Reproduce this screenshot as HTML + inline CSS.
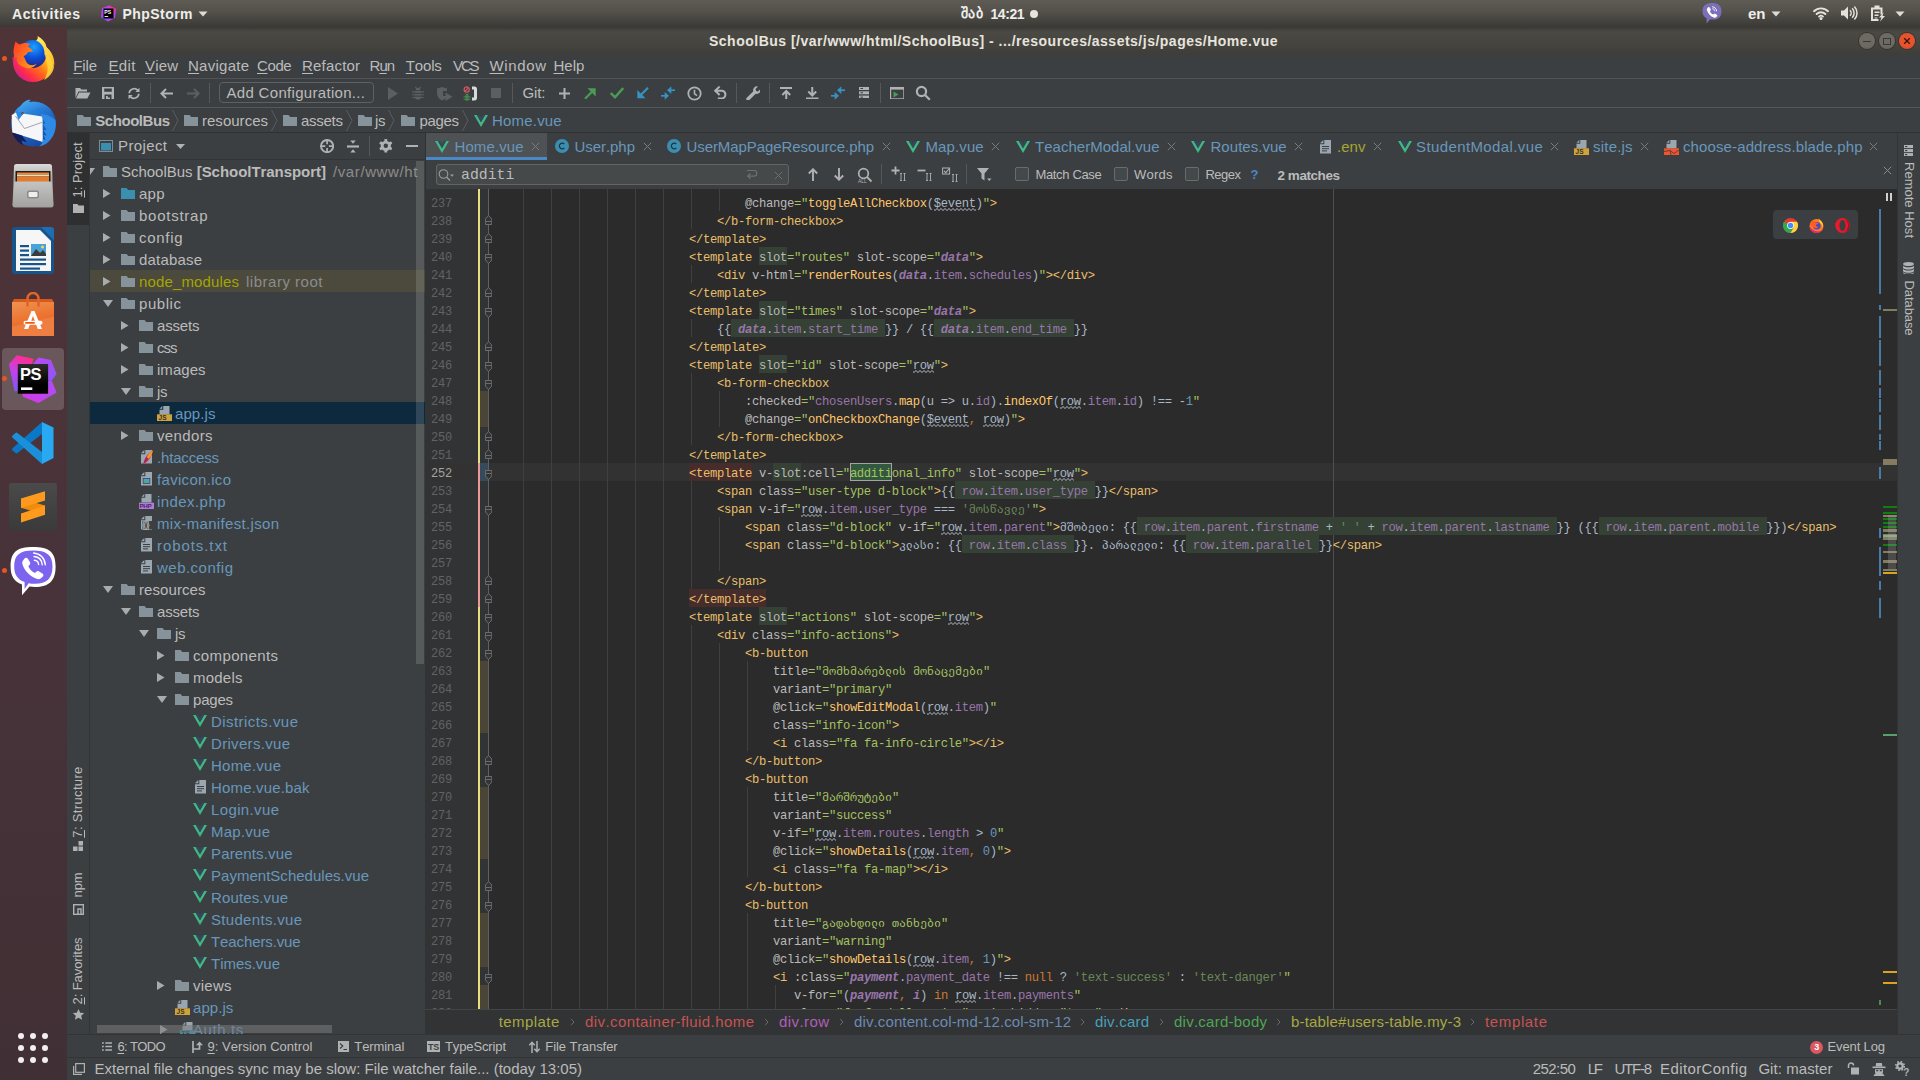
<!DOCTYPE html>
<html><head><meta charset="utf-8"><title>PhpStorm</title>
<style>
html,body{margin:0;padding:0;background:#3c3f41;}
body{width:1920px;height:1080px;position:relative;overflow:hidden;font-family:"Liberation Sans",sans-serif;font-kerning:none;-webkit-font-smoothing:antialiased;}
.b{position:absolute;display:block;}
.t{position:absolute;white-space:pre;display:block;}
.m{font-family:"Liberation Mono",monospace;}
.wv{height:3px;background:linear-gradient(135deg,transparent 38%,#9298a0 38%,#9298a0 62%,transparent 62%) 0 0/4px 3px repeat-x,linear-gradient(45deg,transparent 38%,#9298a0 38%,#9298a0 62%,transparent 62%) 2px 0/4px 3px repeat-x;opacity:.65}
</style></head>
<body>
<!-- top -->
<div class="b" style="left:0px;top:0px;width:1920px;height:27px;background:linear-gradient(#5e5b54,#55524c 40%,#3b3935);"></div>
<span class="t" style="left:12px;top:3.5px;line-height:20px;font-size:14px;color:#eeeeec;font-weight:700;letter-spacing:0.639px;">Activities</span>
<svg class="b" style="left:100px;top:5px;" width="17" height="17" viewBox="0 0 17 17"><path d="M2 3 L9 0.5 L16 4 L15 13 L8 16.5 L1 12z" fill="#b345f1"/><path d="M9 0.5 L16 4 L13 9z" fill="#ff318c"/><path d="M1 12 L8 16.5 L6 9z" fill="#7a57f5"/><rect x="3.5" y="3.5" width="10" height="10" fill="#000"/><rect x="4.6" y="11" width="3.6" height="0.9" fill="#fff"/><text x="4.3" y="9" font-size="5.2" font-weight="700" fill="#fff" font-family="Liberation Sans">PS</text></svg>
<span class="t" style="left:122.5px;top:3.5px;line-height:20px;font-size:14px;color:#eeeeec;font-weight:700;letter-spacing:0.444px;">PhpStorm</span>
<svg class="b" style="left:198px;top:11px;" width="10" height="6" viewBox="0 0 10 6"><path d="M0.5 0.5h9l-4.5 5z" fill="#dcdcd8"/></svg>
<span class="t" style="left:960.5px;top:3.5px;line-height:20px;font-size:13.5px;color:#eeeeec;font-weight:700;letter-spacing:0.978px;">შაბ</span>
<span class="t" style="left:990.5px;top:3.5px;line-height:20px;font-size:14px;color:#eeeeec;font-weight:700;letter-spacing:-0.452px;">14:21</span>
<div class="b" style="left:1030px;top:9.5px;width:8px;height:8px;background:#e6e4de;border-radius:50%"></div>
<svg class="b" style="left:1701px;top:1.5px;" width="22" height="22" viewBox="0 0 22 22"><path d="M11 1c6 0 9.5 2.3 9.5 8.2 0 5.900-3.500 8.400-8.600 8.400-1 0-2-.1-2.800-.3L5.600 21.500v-5.300C2.800 14.800 1.500 12.700 1.500 9.200 1.500 3.300 5 1 11 1z" fill="#7c6fb8"/><path d="M7 5.500c.5-.6 1.300-.5 1.700.1l1 1.600c.3.500.2 1-.2 1.400l-.6.600c.6 1.600 1.700 2.700 3.300 3.400l.6-.6c.4-.4 1-.5 1.400-.2l1.600 1c.6.400.7 1.200.1 1.700l-.8.700c-.6.500-1.400.6-2.200.3C9.600 14.200 7.100 11.700 6 8.400c-.3-.8-.2-1.600.3-2.200z" fill="#fff"/><path d="M11.500 4.800c2.300.2 3.900 1.800 4.100 4.100M11.700 6.800c1.200.1 2 .9 2.100 2.100" stroke="#fff" stroke-width=".9" fill="none" stroke-linecap="round"/></svg>
<span class="t" style="left:1748px;top:4px;line-height:20px;font-size:15px;color:#eeeeec;font-weight:700;letter-spacing:-0.005px;">en</span>
<svg class="b" style="left:1771px;top:10.5px;" width="10" height="6" viewBox="0 0 10 6"><path d="M0.500 0.500h9l-4.500 5z" fill="#dcdcd8"/></svg>
<svg class="b" style="left:1813px;top:6px;" width="16" height="14" viewBox="0 0 16 14"><path d="M1 5.200a10 10 0 0 1 14 0" stroke="#e4e2dc" stroke-width="1.900" fill="none" stroke-linecap="round"/><path d="M3.600 8a6.300 6.300 0 0 1 8.800 0" stroke="#e4e2dc" stroke-width="1.900" fill="none" stroke-linecap="round"/><path d="M6 10.600a2.900 2.900 0 0 1 4 0" stroke="#e4e2dc" stroke-width="1.800" fill="none" stroke-linecap="round"/><circle cx="8" cy="12.600" r="1.500" fill="#e4e2dc"/></svg>
<svg class="b" style="left:1840px;top:5px;" width="18" height="16" viewBox="0 0 18 16"><path d="M1 5.500h3l4-4v13l-4-4h-3z" fill="#e4e2dc"/><path d="M10 5.200a4 4 0 0 1 0 5.600M12.200 3.200a7 7 0 0 1 0 9.600M14.400 1.400a9.600 9.600 0 0 1 0 13.200" stroke="#e4e2dc" stroke-width="1.500" fill="none"/></svg>
<svg class="b" style="left:1870px;top:5px;" width="16" height="17" viewBox="0 0 16 17"><path d="M4.500 0.500h5v2h3v7h-2v-5h-7.500v9.500h5.500v2h-7.500v-13.500h3.500z" fill="#e4e2dc"/><path d="M4.500 6.500h5v1.600h-5zM4.500 9.500h4v1.600h-4zM4.500 12.500h3v1h-3z" fill="#e4e2dc"/><path d="M13.500 7.500l-4.500 5h2.500l-1.500 4 5-5.500h-2.500z" fill="#e4e2dc"/></svg>
<svg class="b" style="left:1895px;top:10.5px;" width="10" height="6" viewBox="0 0 10 6"><path d="M0.500 0.500h9l-4.500 5z" fill="#dcdcd8"/></svg>
<div class="b" style="left:67px;top:27px;width:1853px;height:28px;background:linear-gradient(#3b3935,#4b4943 18%,#46443f 60%,#3f3d39);"></div>
<span class="t" style="left:709px;top:31px;line-height:20px;font-size:14px;color:#e6e4de;font-weight:700;letter-spacing:0.495px;">SchoolBus [/var/www/html/SchoolBus] - .../resources/assets/js/pages/Home.vue</span>
<div class="b" style="left:1859px;top:33px;width:16px;height:16px;background:radial-gradient(circle at 50% 35%,#6d6a63,#6d6a63 60%,#5a5751);border-radius:50%;box-shadow:0 0 0 1px #35332f"></div>
<div class="b" style="left:1863px;top:41px;width:8px;height:1px;background:#3a3835;"></div>
<div class="b" style="left:1878.8px;top:33px;width:16px;height:16px;background:radial-gradient(circle at 50% 35%,#6d6a63,#6d6a63 60%,#5a5751);border-radius:50%;box-shadow:0 0 0 1px #35332f"></div>
<div class="b" style="left:1882.8px;top:37.5px;width:8px;height:7px;background:transparent;box-sizing:border-box;border:1px solid #3a3835"></div>
<div class="b" style="left:1898.8px;top:33px;width:16px;height:16px;background:radial-gradient(circle at 50% 35%,#e6532c,#e6532c 60%,#c9431f);border-radius:50%;box-shadow:0 0 0 1px #35332f"></div>
<svg class="b" style="left:1902.8px;top:37px;" width="8" height="8" viewBox="0 0 8 8"><path d="M1.200 1.200l5.600 5.600M6.800 1.200l-5.600 5.600" stroke="#3c1408" stroke-width="1.300"/></svg>
<!-- dock -->
<div class="b" style="left:0px;top:27px;width:67px;height:1053px;background:linear-gradient(#4e3337,#48333a 55%,#402f34);"></div>
<svg class="b" style="left:10px;top:35px;" width="46" height="48" viewBox="0 0 46 48"><defs><linearGradient id="ffa" x1="0.85" y1="0.1" x2="0.15" y2="0.9"><stop offset="0" stop-color="#fff44f"/><stop offset=".3" stop-color="#ffb31a"/><stop offset=".55" stop-color="#ff6a1a"/><stop offset=".8" stop-color="#ff2d4a"/><stop offset="1" stop-color="#d81b8c"/></linearGradient><radialGradient id="ffb" cx="0.55" cy="0.25" r="0.8"><stop offset="0" stop-color="#1aa3ff"/><stop offset=".5" stop-color="#0b4fd8"/><stop offset="1" stop-color="#2a1a6e"/></radialGradient><linearGradient id="ffc" x1="0" y1="0" x2="1" y2="1"><stop offset="0" stop-color="#fff36b"/><stop offset="1" stop-color="#ffb81f"/></linearGradient><linearGradient id="ffd" x1="0" y1="0" x2="1" y2="0.6"><stop offset="0" stop-color="#ff3a2a"/><stop offset="1" stop-color="#ff9a1a"/></linearGradient></defs>
<circle cx="23" cy="27" r="20" fill="url(#ffa)"/>
<circle cx="22.500" cy="19" r="14" fill="url(#ffb)"/>
<path d="M27.500 1C33 4 36.500 8.500 36.500 12.500 41.500 16.500 45.500 23 44 32 42.500 26 39 21 34.500 19.500 35 13 31.500 8 26 5.500 28 4.500 28 2.500 27.500 1z" fill="url(#ffc)"/>
<path d="M34.500 19.500C39 21 42.500 26 44 32 43 38 39 42.500 34 45 38 39 38.500 32 36.500 27 36 24 35.500 21.500 34.500 19.500z" fill="#ffd23a" opacity=".9"/>
<path d="M5.500 6.500C7 8 8.500 9 10 9.500 13 7.500 17 7.500 20.500 9L17.500 11.500C20 12.500 22 14.500 23 16.500L18 17C17 19.500 15.500 20.500 13.500 21 15 23 15.500 26 17 28 20 31 24 30.500 27 28.500 24.500 32.500 20 34 16 33 9 31 4 25 3.500 17 3.500 13 4.500 9.500 5.500 6.500z" fill="url(#ffd)"/>
<path d="M2 22C2.500 31 8 39 16 42.500 9.500 37 6.500 30 7 22 5.500 22.500 3.500 22.500 2 22z" fill="#e3247a" opacity=".55"/></svg>
<svg class="b" style="left:9px;top:98.5px;" width="48" height="48" viewBox="0 0 48 48"><defs><linearGradient id="tba" x1="0.2" y1="0" x2="0.8" y2="1"><stop offset="0" stop-color="#2f9bf0"/><stop offset="1" stop-color="#143f9a"/></linearGradient><linearGradient id="tbb" x1="0" y1="0" x2="1" y2="1"><stop offset="0" stop-color="#4ab4f7"/><stop offset="1" stop-color="#1a5cc2"/></linearGradient></defs>
<circle cx="24.500" cy="25" r="22.500" fill="url(#tba)"/>
<path d="M8 18C8 11 12 4.500 17.500 1.500 19 .7 20.500 .5 21.500 1 20.500 2 20 3 20 3.500 28 1.500 37 4.500 42.500 11 38 8.500 32 8 27 10 22 12 17 13.500 8 18z" fill="url(#tbb)"/>
<path d="M2.700 16L7 13.500 33.500 17.500 33.800 43 3.200 33.500z" fill="#f6f6f8"/>
<path d="M6.500 17L15.500 29.500 33.500 23.200" stroke="#8a8f9c" stroke-width=".8" fill="none"/>
<path d="M6.500 12L14.500 14.500 9.500 21z" fill="#2a86e0"/>
<path d="M31.500 15C37 15 42 17 46.500 21 47.500 28 46 35 42 40 39 44 35 46.500 30 47.500 33 45 34 43 33.800 40L36.500 41 34.500 36 37.500 36.500 34.500 31 37.500 31 34 25 36.500 24.500z" fill="#2f8ae6"/>
<path d="M3.200 33.500C5 39 9 43.500 14 46L12.500 41.500 18 43.500 13 36.600z" fill="#141c5a"/>
<circle cx="13.500" cy="14.300" r="1.100" fill="#2a2010"/><circle cx="13.500" cy="14.300" r=".5" fill="#e8a020"/></svg>
<svg class="b" style="left:12px;top:164px;" width="42" height="45" viewBox="0 0 42 45"><defs><linearGradient id="fla" x1="0" y1="0" x2="0" y2="1"><stop offset="0" stop-color="#dcdcda"/><stop offset=".35" stop-color="#a9a9a7"/><stop offset="1" stop-color="#9a9a98"/></linearGradient><linearGradient id="flb" x1="0" y1="0" x2="0" y2="1"><stop offset="0" stop-color="#c4c4c2"/><stop offset="1" stop-color="#a2a2a0"/></linearGradient></defs>
<path d="M2 2.500a2.500 2.500 0 0 1 2.500-2.500h33a2.500 2.500 0 0 1 2.500 2.500l1.500 38.500a2.500 2.500 0 0 1-2.500 2.500h-36a2.500 2.500 0 0 1-2.500-2.500z" fill="url(#fla)"/>
<rect x="3.500" y="7" width="35" height="12" fill="#1e1e1e"/>
<rect x="5" y="8.500" width="32" height="2" fill="#e8873a"/><rect x="5" y="10.500" width="32" height="2" fill="#f7d9a8"/><rect x="5" y="12.500" width="32" height="6.500" fill="#e27b2c"/>
<path d="M2.500 17.500h37l1.800 23a2.500 2.500 0 0 1-2.500 2.500h-35.600a2.500 2.500 0 0 1-2.500-2.500z" fill="url(#flb)"/>
<rect x="15" y="26.500" width="12" height="8" rx="2" fill="#8a8a88"/><rect x="16.500" y="28" width="9" height="5" rx="1" fill="#eeeeee"/></svg>
<svg class="b" style="left:12px;top:226px;" width="43" height="49" viewBox="0 0 43 49"><path d="M3 1h27l12 12v32a3 3 0 0 1-3 3H3a3 3 0 0 1-3-3V4a3 3 0 0 1 3-3z" fill="#18548a"/>
<path d="M4 4h24l11 11v30H4z" fill="#f6f6f6"/>
<path d="M29 1h10a3 3 0 0 1 3 3v10z" fill="#1d6fb3"/>
<rect x="8" y="19" width="9" height="2.200" fill="#18548a"/><rect x="8" y="23.500" width="9" height="2.200" fill="#18548a"/><rect x="8" y="28" width="9" height="2.200" fill="#18548a"/>
<rect x="8" y="32.500" width="26" height="2.200" fill="#18548a"/><rect x="8" y="37" width="26" height="2.200" fill="#18548a"/><rect x="8" y="41.500" width="20" height="2.200" fill="#18548a"/>
<rect x="19" y="18" width="15" height="12" fill="#4aa3d8"/><path d="M19 30l5-7 4 4 3-3 3 4v2z" fill="#3b3b3b"/><circle cx="30.500" cy="21" r="1.500" fill="#f5d94a"/></svg>
<svg class="b" style="left:11px;top:292px;" width="44" height="46" viewBox="0 0 44 46"><defs><linearGradient id="usa" x1="0" y1="0" x2="0.3" y2="1"><stop offset="0" stop-color="#ee9350"/><stop offset=".65" stop-color="#ec6f2c"/><stop offset=".68" stop-color="#ee7d3f"/><stop offset="1" stop-color="#ee7f42"/></linearGradient></defs>
<path d="M3 7h38l2 3.500H1z" fill="#d9581c"/>
<path d="M16.500 14V6.500a5.500 5.500 0 0 1 11 0V14" stroke="#e0642a" stroke-width="2.600" fill="none"/>
<path d="M1 10h42v34H1z" fill="url(#usa)"/>
<path d="M16.500 10v4.500M27.500 10v4.500" stroke="#e0642a" stroke-width="2.600"/>
<path d="M20.500 19h3l7.500 18h-4.200l-4.800-13-4.800 13H13z" fill="#fff"/>
<rect x="12.500" y="28.800" width="19" height="4" rx="2" fill="#fff"/><rect x="14" y="29.900" width="10" height="1.800" rx=".9" fill="#f05a14"/></svg>
<div class="b" style="left:2px;top:348px;width:62px;height:62px;background:#6a575c;border-radius:4px"></div>
<svg class="b" style="left:9px;top:353px;" width="49" height="51" viewBox="0 0 49 51"><defs><linearGradient id="psa" x1="0.5" y1="0" x2="0.2" y2="1"><stop offset="0" stop-color="#ff2d8e"/><stop offset=".45" stop-color="#c840e8"/><stop offset="1" stop-color="#7a5af5"/></linearGradient><linearGradient id="psb" x1="0" y1="0" x2="1" y2="1"><stop offset="0" stop-color="#c246f2"/><stop offset="1" stop-color="#8a58f6"/></linearGradient><linearGradient id="psd" x1="0" y1="0" x2="0" y2="1"><stop offset="0" stop-color="#fff" stop-opacity=".17"/><stop offset=".7" stop-color="#fff" stop-opacity="0"/></linearGradient><linearGradient id="psc" x1="0" y1="1" x2="1" y2="0"><stop offset="0" stop-color="#d83ae6"/><stop offset="1" stop-color="#a84ff5"/></linearGradient></defs>
<path d="M0 11L7.800 2.200 24.700 5.800 22 14 12 14 12 38 5.400 38.300z" fill="url(#psa)"/>
<path d="M29.500 4.600L42 7 47.600 20.900 42.700 27.500 36 27 36 11 24 11z" fill="url(#psb)"/>
<path d="M13.900 43.700L29.500 50 47.600 39.500 42.700 27.500 36 28 36 39 13 39z" fill="url(#psc)"/>
<rect x="8.800" y="11" width="30.300" height="29.700" fill="#000"/>
<rect x="8.800" y="11" width="30.300" height="29.700" fill="url(#psd)"/>
<rect x="12" y="34.400" width="11.300" height="2.600" fill="#fff"/>
<text x="11" y="27" font-size="16.500" font-weight="700" fill="#fff" font-family="Liberation Sans" letter-spacing="-.4">PS</text></svg>
<svg class="b" style="left:11px;top:421px;" width="44" height="44" viewBox="0 0 44 44"><path d="M31 1L1.300 27.500Q.5 28.500 1.500 29.500L4.500 32Q5.500 32.800 6.500 32L31 13z" fill="#0a78c6"/>
<path d="M1.500 14.500Q.5 15.500 1.300 16.500L31 43V31L6.500 12Q5.500 11.200 4.500 12z" fill="#1b8fd8"/>
<path d="M31 1l11.500 5.400V37L31 43z" fill="#2aa9f3"/></svg>
<div class="b" style="left:9px;top:483px;width:48px;height:48px;background:linear-gradient(#4a4a4a,#3a3a3a);border-radius:3px"></div>
<svg class="b" style="left:9px;top:483px;" width="48" height="48" viewBox="0 0 48 48"><path d="M12 15.500v9.300l24 6.900v-9.200z" fill="#f08c0a"/><path d="M12 15.500l24-7.300v9.300l-24 7.300z" fill="#ff9a1f"/><path d="M12 30.500l24-8v9.200l-24 7.800z" fill="#ff9a1f"/></svg>
<svg class="b" style="left:9px;top:546px;" width="48" height="50" viewBox="0 0 48 50"><path d="M24 1C40 1 46.600 6 46.600 20.500 46.600 35 40 41 26 41 24 41 22 40.900 20.500 40.600L13 49.300V38.500C5 35.500 1.600 30 1.600 20.500 1.600 6 8 1 24 1z" fill="#fff"/>
<path d="M24 4.600C37.500 4.600 43.500 9 43.500 20.500 43.500 32.500 37.500 37.800 26 37.800 23.500 37.800 21.500 37.600 19.600 37.200L15.600 43V36C8.500 33.500 5.200 28.500 5.200 20.500 5.200 9 11 4.600 24 4.600z" fill="#7d64ee"/>
<path d="M15.500 12.500c1-1.200 2.600-1 3.400.2l2 3.300c.6 1 .4 2.100-.4 2.900l-1.200 1.200c1.200 3.200 3.500 5.500 6.700 6.900l1.200-1.200c.8-.8 2-.9 2.900-.4l3.300 2c1.200.8 1.400 2.400.2 3.400l-1.600 1.400c-1.200 1-2.800 1.200-4.400.6-6.600-2.500-11.600-7.500-14-14.100-.6-1.600-.4-3.200.6-4.400z" fill="#fff"/>
<path d="M25 10.500c4.600.4 7.800 3.600 8.200 8.200M25.400 14.300c2.400.2 4 1.800 4.200 4.200M24.600 7c6.500.5 11.200 5.200 11.700 11.700" stroke="#fff" stroke-width="1.400" fill="none" stroke-linecap="round"/></svg>
<div class="b" style="left:2px;top:56.2px;width:5px;height:5px;background:#e95420;border-radius:50%"></div>
<div class="b" style="left:2px;top:376px;width:5px;height:5px;background:#e95420;border-radius:50%"></div>
<div class="b" style="left:2px;top:568px;width:5px;height:5px;background:#e95420;border-radius:50%"></div>
<div class="b" style="left:17.6px;top:1032.5px;width:6.6px;height:6.6px;background:#f2f0ee;border-radius:50%"></div>
<div class="b" style="left:29.65px;top:1032.5px;width:6.6px;height:6.6px;background:#f2f0ee;border-radius:50%"></div>
<div class="b" style="left:41.7px;top:1032.5px;width:6.6px;height:6.6px;background:#f2f0ee;border-radius:50%"></div>
<div class="b" style="left:17.6px;top:1044.7px;width:6.6px;height:6.6px;background:#f2f0ee;border-radius:50%"></div>
<div class="b" style="left:29.65px;top:1044.7px;width:6.6px;height:6.6px;background:#f2f0ee;border-radius:50%"></div>
<div class="b" style="left:41.7px;top:1044.7px;width:6.6px;height:6.6px;background:#f2f0ee;border-radius:50%"></div>
<div class="b" style="left:17.6px;top:1056.9px;width:6.6px;height:6.6px;background:#f2f0ee;border-radius:50%"></div>
<div class="b" style="left:29.65px;top:1056.9px;width:6.6px;height:6.6px;background:#f2f0ee;border-radius:50%"></div>
<div class="b" style="left:41.7px;top:1056.9px;width:6.6px;height:6.6px;background:#f2f0ee;border-radius:50%"></div>
<!-- idetop -->
<div class="b" style="left:67px;top:78px;width:1853px;height:1px;background:#515355;"></div>
<span class="t" style="left:73.3px;top:56px;line-height:20px;font-size:15px;color:#bbbbbb;letter-spacing:-0.157px;text-underline-offset:2px;"><u>F</u>ile</span>
<span class="t" style="left:108.4px;top:56px;line-height:20px;font-size:15px;color:#bbbbbb;letter-spacing:0.384px;text-underline-offset:2px;"><u>E</u>dit</span>
<span class="t" style="left:145px;top:56px;line-height:20px;font-size:15px;color:#bbbbbb;letter-spacing:0.163px;text-underline-offset:2px;"><u>V</u>iew</span>
<span class="t" style="left:188px;top:56px;line-height:20px;font-size:15px;color:#bbbbbb;letter-spacing:0.257px;text-underline-offset:2px;"><u>N</u>avigate</span>
<span class="t" style="left:257px;top:56px;line-height:20px;font-size:15px;color:#bbbbbb;letter-spacing:-0.386px;text-underline-offset:2px;"><u>C</u>ode</span>
<span class="t" style="left:302px;top:56px;line-height:20px;font-size:15px;color:#bbbbbb;letter-spacing:0.187px;text-underline-offset:2px;"><u>R</u>efactor</span>
<span class="t" style="left:369.6px;top:56px;line-height:20px;font-size:15px;color:#bbbbbb;letter-spacing:-1.059px;text-underline-offset:2px;">R<u>u</u>n</span>
<span class="t" style="left:405.8px;top:56px;line-height:20px;font-size:15px;color:#bbbbbb;letter-spacing:-0.170px;text-underline-offset:2px;"><u>T</u>ools</span>
<span class="t" style="left:453px;top:56px;line-height:20px;font-size:15px;color:#bbbbbb;letter-spacing:-2.121px;text-underline-offset:2px;">VC<u>S</u></span>
<span class="t" style="left:489.5px;top:56px;line-height:20px;font-size:15px;color:#bbbbbb;letter-spacing:0.630px;text-underline-offset:2px;"><u>W</u>indow</span>
<span class="t" style="left:553.4px;top:56px;line-height:20px;font-size:15px;color:#bbbbbb;letter-spacing:0.050px;text-underline-offset:2px;"><u>H</u>elp</span>
<div class="b" style="left:67px;top:107px;width:1853px;height:1px;background:#555759;"></div>
<svg class="b" style="left:75px;top:87px;" width="16" height="12" viewBox="0 0 16 12"><path d="M0.500 1h4.500l1.500 1.500h5.500v2h-8.500l-3 6.500z" fill="#afb1b3"/><path d="M4 5.500h11.500l-3.200 6h-11.300z" fill="#afb1b3"/></svg>
<svg class="b" style="left:102px;top:87px;" width="12" height="12" viewBox="0 0 12 12"><path d="M0 0h12v12h-2.500v-4.500h-7v4.500h-2.500z M2.200 1.500v3.200h7.600v-3.200z M4 9v3h4v-1.500h-2.200v-1.500z" fill="#afb1b3" fill-rule="evenodd"/></svg>
<svg class="b" style="left:127px;top:86.5px;" width="14" height="13" viewBox="0 0 14 13"><path d="M2.200 6.200a4.900 4.900 0 0 1 8.600-2.800" stroke="#afb1b3" stroke-width="1.700" fill="none"/><path d="M11.800 6.800a4.900 4.900 0 0 1-8.600 2.800" stroke="#afb1b3" stroke-width="1.700" fill="none"/><path d="M12.500 0.800v4.200h-4.200z" fill="#afb1b3"/><path d="M1.500 12.200v-4.200h4.200z" fill="#afb1b3"/></svg>
<div class="b" style="left:150px;top:83px;width:1px;height:20px;background:#555759;"></div>
<svg class="b" style="left:160px;top:87.5px;" width="13" height="11" viewBox="0 0 13 11"><path d="M13 5.500h-11M6 1l-4.600 4.500 4.600 4.500" stroke="#afb1b3" stroke-width="2" fill="none"/></svg>
<svg class="b" style="left:187px;top:87.5px;" width="13" height="11" viewBox="0 0 13 11"><path d="M0 5.500h11M7 1l4.600 4.500-4.600 4.500" stroke="#5c5f61" stroke-width="2" fill="none"/></svg>
<div class="b" style="left:209px;top:83px;width:1px;height:20px;background:#555759;"></div>
<div class="b" style="left:219px;top:82px;width:155px;height:21px;background:transparent;box-sizing:border-box;border:1px solid #5e6163;border-radius:4px"></div>
<span class="t" style="left:226.5px;top:82.5px;line-height:20px;font-size:15px;color:#bbbbbb;letter-spacing:0.311px;">Add Configuration...</span>
<svg class="b" style="left:388px;top:86.5px;" width="10" height="13" viewBox="0 0 10 13"><path d="M0 0l10 6.500-10 6.500z" fill="#5c5f61"/></svg>
<svg class="b" style="left:411px;top:86px;" width="14" height="14" viewBox="0 0 14 14"><path d="M4.300 0.800l1.400 1.800M9.700 0.800l-1.400 1.800" stroke="#5c5f61" stroke-width="1.100"/><path d="M4.600 4.200a2.400 2.400 0 0 1 4.800 0z" fill="#5c5f61"/><path d="M3.600 4.900h6.800v5a3.400 3.600 0 0 1-6.800 0z" fill="#5c5f61"/><path d="M3 7.300h8M3 10.100h8" stroke="#3c3f41" stroke-width="1"/><path d="M1 5.900h2.600M1 8.700h2.600M1.300 11.500h2.600M10.400 5.900h2.600M10.400 8.700h2.600M10.100 11.500h2.600" stroke="#5c5f61" stroke-width="1.100"/></svg>
<svg class="b" style="left:437px;top:87px;" width="16" height="14" viewBox="0 0 16 14"><path d="M0 1.500l5-1.500 5 1.500v2.500h-4v5h4c-1 2-2.500 3.500-5 4.500-3.500-1.500-5-4.500-5-8z" fill="#5c5f61"/><path d="M8.500 5.500l7 4.200-7 4.300z" fill="#5c5f61"/></svg>
<svg class="b" style="left:463px;top:85.5px;" width="15" height="15.5" viewBox="0 0 15 15.5"><circle cx="3.700" cy="3.500" r="2.600" stroke="#db5860" stroke-width="1.200" fill="none"/><path d="M1.900 5.300l3.600-3.600" stroke="#db5860" stroke-width="1.100"/><path d="M9 0.500h2.500c1.500 0 2.500 1 2.500 2.500v9c0 1.500-1 2.500-2.500 2.500h-2.500v-3h2v-8h-2z" fill="#d8dadc"/></svg>
<svg class="b" style="left:462.7px;top:92.7px;" width="8" height="8" viewBox="0 0 14 14"><path d="M4.300 0.800l1.400 1.800M9.700 0.800l-1.400 1.800" stroke="#499c54" stroke-width="1.100"/><path d="M4.600 4.200a2.400 2.400 0 0 1 4.800 0z" fill="#499c54"/><path d="M3.600 4.900h6.800v5a3.400 3.600 0 0 1-6.800 0z" fill="#499c54"/><path d="M3 7.300h8M3 10.100h8" stroke="#3c3f41" stroke-width="1"/><path d="M1 5.900h2.600M1 8.700h2.600M1.300 11.500h2.600M10.400 5.900h2.600M10.400 8.700h2.600M10.100 11.500h2.600" stroke="#499c54" stroke-width="1.100"/></svg>
<div class="b" style="left:491px;top:88px;width:10px;height:10px;background:#5c5f61;"></div>
<div class="b" style="left:512px;top:83px;width:1px;height:20px;background:#555759;"></div>
<span class="t" style="left:522.5px;top:82.5px;line-height:20px;font-size:15px;color:#bbbbbb;letter-spacing:-0.112px;">Git:</span>
<svg class="b" style="left:558.5px;top:87.5px;" width="11" height="11" viewBox="0 0 11 11"><path d="M5.500 0v11M0 5.500h11" stroke="#afb1b3" stroke-width="2"/></svg>
<svg class="b" style="left:583.5px;top:87.5px;" width="12" height="11.5" viewBox="0 0 12 11.5"><path d="M1 10.800l8-8" stroke="#499c54" stroke-width="2.100" fill="none"/><path d="M3.500 0.300h8.200v8.200z" fill="#499c54"/></svg>
<svg class="b" style="left:610px;top:87px;" width="14" height="11.5" viewBox="0 0 14 11.5"><path d="M0.800 6l4.200 4.200 8.200-9.200" stroke="#499c54" stroke-width="2.400" fill="none"/></svg>
<svg class="b" style="left:636.5px;top:87px;" width="12" height="11.5" viewBox="0 0 12 11.5"><path d="M11 0.700l-8 8" stroke="#3592c4" stroke-width="2.100" fill="none"/><path d="M0.300 3v8.200h8.200z" fill="#3592c4"/></svg>
<svg class="b" style="left:661px;top:86px;" width="14" height="14" viewBox="0 0 14 14"><path d="M14 4.200h-5" stroke="#3592c4" stroke-width="1.700"/><path d="M10.300 0.300l-4.300 3.900 4.300 3.900z" fill="#3592c4"/><path d="M0 9.800h5" stroke="#3592c4" stroke-width="1.700"/><path d="M3.700 5.900l4.300 3.900-4.300 3.900z" fill="#3592c4"/></svg>
<svg class="b" style="left:686.5px;top:85.5px;" width="15" height="15" viewBox="0 0 15 15"><circle cx="7.500" cy="7.500" r="6.200" stroke="#afb1b3" stroke-width="1.800" fill="none"/><path d="M7.500 3.800v4l2.600 1.800" stroke="#afb1b3" stroke-width="1.600" fill="none"/></svg>
<svg class="b" style="left:714px;top:86px;" width="13.5" height="13" viewBox="0 0 13.5 13"><path d="M1.500 4.800h7a4 4 0 0 1 0 7.700h-4.700" stroke="#afb1b3" stroke-width="2" fill="none"/><path d="M5.600 0.600l-4.400 4.200 4.400 4.200" stroke="#afb1b3" stroke-width="2" fill="none"/></svg>
<div class="b" style="left:736px;top:83px;width:1px;height:20px;background:#555759;"></div>
<svg class="b" style="left:746px;top:86px;" width="14" height="14" viewBox="0 0 14 14"><path d="M0.800 11.800l6.500-6.500a3.800 3.800 0 0 1 4.700-4.800l-2.500 2.500.6 1.900 1.900.6 2.500-2.500a3.800 3.800 0 0 1-4.800 4.700l-6.500 6.500a1.400 1.400 0 0 1-2.400-2.400z" fill="#afb1b3"/></svg>
<div class="b" style="left:769px;top:83px;width:1px;height:20px;background:#555759;"></div>
<svg class="b" style="left:779.5px;top:86.5px;" width="12.5" height="12.5" viewBox="0 0 12.5 12.5"><path d="M0 1h12.500" stroke="#afb1b3" stroke-width="2"/><path d="M6.250 12.500v-8M2.300 8l3.950-4 3.950 4" stroke="#afb1b3" stroke-width="2" fill="none"/></svg>
<svg class="b" style="left:806px;top:86.5px;" width="12.5" height="12.5" viewBox="0 0 12.5 12.5"><path d="M0 11.500h12.500" stroke="#afb1b3" stroke-width="2"/><path d="M6.250 0v8M2.300 4.500l3.950 4 3.950-4" stroke="#afb1b3" stroke-width="2" fill="none"/></svg>
<svg class="b" style="left:831px;top:86px;" width="14" height="14" viewBox="0 0 14 14"><path d="M14 4.200h-5" stroke="#3592c4" stroke-width="1.700"/><path d="M10.300 0.300l-4.300 3.900 4.300 3.900z" fill="#3592c4"/><path d="M0 9.800h5" stroke="#3592c4" stroke-width="1.700"/><path d="M3.700 5.900l4.300 3.900-4.300 3.900z" fill="#3592c4"/></svg>
<svg class="b" style="left:858.5px;top:86.7px;" width="10.5" height="11.6" viewBox="0 0 10.5 11.6"><rect x="0" y="0" width="10.500" height="3" fill="#afb1b3"/><rect x="0" y="4.300" width="10.500" height="3" fill="#afb1b3"/><rect x="0" y="8.600" width="10.500" height="3" fill="#afb1b3"/><rect x="1.500" y="1" width="2.500" height="1" fill="#3c3f41"/><rect x="1.500" y="5.300" width="2.500" height="1" fill="#3c3f41"/><rect x="1.500" y="9.600" width="2.500" height="1" fill="#3c3f41"/></svg>
<div class="b" style="left:880px;top:83px;width:1px;height:20px;background:#555759;"></div>
<svg class="b" style="left:889.5px;top:86.7px;" width="14.5" height="12.5" viewBox="0 0 14.5 12.5"><rect x="0.600" y="0.600" width="13.300" height="11.300" fill="none" stroke="#afb1b3" stroke-width="1.200"/><rect x="0" y="0" width="14.500" height="2.600" fill="#afb1b3"/><path d="M3.500 4.500l5 3-5 3z" fill="#499c54"/></svg>
<svg class="b" style="left:915px;top:85px;" width="16" height="16" viewBox="0 0 16 16"><circle cx="6.500" cy="6.500" r="4.600" stroke="#afb1b3" stroke-width="2.200" fill="none"/><path d="M10 10l4.800 4.800" stroke="#afb1b3" stroke-width="2.300"/></svg>
<div class="b" style="left:67px;top:132px;width:1853px;height:1px;background:#2f3133;"></div>
<svg class="b" style="left:77px;top:115px;" width="14" height="11" viewBox="0 0 14 11"><path d="M0 0h5.600l1.600 2H14v9H0z" fill="#87939a"/></svg>
<span class="t" style="left:95.3px;top:110.5px;line-height:20px;font-size:15px;color:#bbbbbb;font-weight:700;letter-spacing:-0.455px;">SchoolBus</span>
<svg class="b" style="left:172.4px;top:109px;" width="7" height="23" viewBox="0 0 7 23"><path d="M0.500 1l5.500 10.500-5.500 10.500" stroke="#5b5e60" stroke-width="1" fill="none"/></svg>
<svg class="b" style="left:184px;top:115px;" width="14" height="11" viewBox="0 0 14 11"><path d="M0 0h5.600l1.600 2H14v9H0z" fill="#87939a"/></svg>
<span class="t" style="left:202px;top:110.5px;line-height:20px;font-size:15px;color:#bbbbbb;letter-spacing:0.018px;">resources</span>
<svg class="b" style="left:270.7px;top:109px;" width="7" height="23" viewBox="0 0 7 23"><path d="M0.500 1l5.500 10.500-5.500 10.500" stroke="#5b5e60" stroke-width="1" fill="none"/></svg>
<svg class="b" style="left:282.5px;top:115px;" width="14" height="11" viewBox="0 0 14 11"><path d="M0 0h5.600l1.600 2H14v9H0z" fill="#87939a"/></svg>
<span class="t" style="left:301px;top:110.5px;line-height:20px;font-size:15px;color:#bbbbbb;letter-spacing:-0.270px;">assets</span>
<svg class="b" style="left:345.7px;top:109px;" width="7" height="23" viewBox="0 0 7 23"><path d="M0.500 1l5.500 10.500-5.500 10.500" stroke="#5b5e60" stroke-width="1" fill="none"/></svg>
<svg class="b" style="left:358px;top:115px;" width="14" height="11" viewBox="0 0 14 11"><path d="M0 0h5.600l1.600 2H14v9H0z" fill="#87939a"/></svg>
<span class="t" style="left:375px;top:110.5px;line-height:20px;font-size:15px;color:#bbbbbb;letter-spacing:-0.233px;">js</span>
<svg class="b" style="left:388.2px;top:109px;" width="7" height="23" viewBox="0 0 7 23"><path d="M0.500 1l5.500 10.500-5.500 10.500" stroke="#5b5e60" stroke-width="1" fill="none"/></svg>
<svg class="b" style="left:400.5px;top:115px;" width="14" height="11" viewBox="0 0 14 11"><path d="M0 0h5.600l1.600 2H14v9H0z" fill="#87939a"/></svg>
<span class="t" style="left:419.6px;top:110.5px;line-height:20px;font-size:15px;color:#bbbbbb;letter-spacing:-0.367px;">pages</span>
<svg class="b" style="left:461.7px;top:109px;" width="7" height="23" viewBox="0 0 7 23"><path d="M0.500 1l5.500 10.500-5.500 10.500" stroke="#5b5e60" stroke-width="1" fill="none"/></svg>
<svg class="b" style="left:474px;top:114.5px;" width="14" height="12" viewBox="0 0 14 12"><path d="M0 0h2.800L7 7.300 11.200 0H14L7 12z" fill="#41b883"/><path d="M2.800 0h2.600L7 2.800 8.600 0h2.600L7 7.300z" fill="#35495e"/></svg>
<span class="t" style="left:492px;top:110.5px;line-height:20px;font-size:15px;color:#6897bb;letter-spacing:0.191px;">Home.vue</span>
<!-- tree -->
<div class="b" style="left:67px;top:133px;width:23px;height:901px;background:#3c3f41;"></div>
<div class="b" style="left:89px;top:133px;width:1px;height:901px;background:#323436;"></div>
<div class="b" style="left:67px;top:133px;width:22px;height:92px;background:#2d2f30;"></div>
<span class="t" style="left:78px;top:170px;width:0;height:0;overflow:visible;"><span class="t" style="transform:translate(-50%,-50%) rotate(-90deg);font-size:13px;line-height:16px;color:#bbbbbb;letter-spacing:0.010px;text-underline-offset:2px"><u>1</u>: Project</span></span>
<svg class="b" style="left:73px;top:204px;" width="11" height="9" viewBox="0 0 11 9"><path d="M0 0h4.400l1.300 1.600h5.300v7.400h-11z" fill="#afb1b3"/></svg>
<span class="t" style="left:78px;top:802px;width:0;height:0;overflow:visible;"><span class="t" style="transform:translate(-50%,-50%) rotate(-90deg);font-size:13px;line-height:16px;color:#bbbbbb;letter-spacing:0.346px;text-underline-offset:2px"><u>7</u>: Structure</span></span>
<svg class="b" style="left:73px;top:841px;" width="10" height="10" viewBox="0 0 10 10"><rect x="5.500" y="0" width="4.500" height="4.500" fill="#afb1b3"/><rect x="0" y="5.500" width="4.500" height="4.500" fill="#afb1b3"/><rect x="5.500" y="5.500" width="4.500" height="4.500" fill="#afb1b3"/></svg>
<span class="t" style="left:78px;top:885px;width:0;height:0;overflow:visible;"><span class="t" style="transform:translate(-50%,-50%) rotate(-90deg);font-size:13px;line-height:16px;color:#bbbbbb;letter-spacing:-0.145px;text-underline-offset:2px">npm</span></span>
<svg class="b" style="left:73px;top:904px;" width="11" height="11" viewBox="0 0 11 11"><rect x="0.700" y="0.700" width="9.600" height="9.600" fill="none" stroke="#afb1b3" stroke-width="1.400"/><path d="M5 10v-5h3v5" stroke="#afb1b3" stroke-width="1.400" fill="none"/></svg>
<span class="t" style="left:78px;top:971px;width:0;height:0;overflow:visible;"><span class="t" style="transform:translate(-50%,-50%) rotate(-90deg);font-size:13px;line-height:16px;color:#bbbbbb;letter-spacing:-0.083px;text-underline-offset:2px"><u>2</u>: Favorites</span></span>
<svg class="b" style="left:72.5px;top:1009px;" width="11" height="11" viewBox="0 0 11 11"><path d="M5.500 0l1.700 3.700 4 .4-3 2.700.9 4-3.600-2.100-3.600 2.100.9-4-3-2.700 4-.4z" fill="#afb1b3"/></svg>
<div class="b" style="left:90px;top:159px;width:335px;height:1px;background:#323436;"></div>
<svg class="b" style="left:99px;top:140px;" width="14" height="12" viewBox="0 0 14 12"><rect x="0.500" y="0.500" width="13" height="11" fill="#3c3f41" stroke="#7f8b91" stroke-width="1"/><rect x="2" y="3" width="10" height="7.500" fill="#3a8fb0"/></svg>
<span class="t" style="left:118px;top:136px;line-height:20px;font-size:15px;color:#bbbbbb;letter-spacing:0.386px;">Project</span>
<svg class="b" style="left:175.5px;top:144px;" width="9" height="5" viewBox="0 0 9 5"><path d="M0 0h9l-4.500 5z" fill="#afb1b3"/></svg>
<svg class="b" style="left:320px;top:139px;" width="14.2" height="14.2" viewBox="0 0 14.2 14.2"><circle cx="7.100" cy="7.100" r="6.100" stroke="#afb1b3" stroke-width="1.900" fill="none"/><path d="M7.100 0.500v4.800M7.100 8.900v4.800M0.500 7.100h4.800M8.900 7.100h4.800" stroke="#afb1b3" stroke-width="1.700"/></svg>
<svg class="b" style="left:347px;top:139.5px;" width="12" height="13" viewBox="0 0 12 13"><path d="M0 6.500h12" stroke="#afb1b3" stroke-width="2.200"/><path d="M3.300 0.500h5.400l-2.700 3.200zM3.300 12.500h5.400l-2.700-3.200z" fill="#afb1b3"/></svg>
<div class="b" style="left:369px;top:136px;width:1px;height:20px;background:#555759;"></div>
<svg class="b" style="left:379.2px;top:139.2px;" width="13.6" height="13.6" viewBox="0 0 13.6 13.6"><circle cx="6.800" cy="6.800" r="3.700" stroke="#afb1b3" stroke-width="2.900" fill="none"/><rect x="5.400" y="0" width="2.800" height="3.400" rx=".6" fill="#afb1b3" transform="rotate(0 6.800 6.800)"/><rect x="5.400" y="0" width="2.800" height="3.400" rx=".6" fill="#afb1b3" transform="rotate(60 6.800 6.800)"/><rect x="5.400" y="0" width="2.800" height="3.400" rx=".6" fill="#afb1b3" transform="rotate(120 6.800 6.800)"/><rect x="5.400" y="0" width="2.800" height="3.400" rx=".6" fill="#afb1b3" transform="rotate(180 6.800 6.800)"/><rect x="5.400" y="0" width="2.800" height="3.400" rx=".6" fill="#afb1b3" transform="rotate(240 6.800 6.800)"/><rect x="5.400" y="0" width="2.800" height="3.400" rx=".6" fill="#afb1b3" transform="rotate(300 6.800 6.800)"/></svg>
<div class="b" style="left:406px;top:144.8px;width:12.2px;height:2.3px;background:#afb1b3;"></div>
<div class="b" style="left:90px;top:160px;width:335px;height:874px;overflow:hidden">
<svg class="b" style="left:-5.5px;top:7.5px;" width="10" height="7" viewBox="0 0 10 7"><path d="M0 0h10l-5 7z" fill="#a9acae"/></svg>
<svg class="b" style="left:13px;top:5.5px;" width="14" height="11" viewBox="0 0 14 11"><path d="M0 0h5.600l1.600 2H14v9H0z" fill="#87939a"/></svg>
<span class="t" style="left:31px;top:2px;line-height:20px;font-size:15px;color:#bbbbbb;letter-spacing:-0.026px;">SchoolBus</span>
<span class="t" style="left:106.7px;top:2px;line-height:20px;font-size:15px;color:#bbbbbb;font-weight:700;letter-spacing:-0.044px;">[SchoolTransport]</span>
<span class="t" style="left:243px;top:2px;line-height:20px;font-size:15px;color:#8c8c8c;letter-spacing:0.600px;">/var/www/ht</span>
<svg class="b" style="left:13px;top:28.5px;" width="7.5" height="9" viewBox="0 0 7.5 9"><path d="M0 0l7.500 4.500-7.500 4.500z" fill="#a9acae"/></svg>
<svg class="b" style="left:31px;top:27.5px;" width="14" height="11" viewBox="0 0 14 11"><path d="M0 0h5.600l1.600 2H14v9H0z" fill="#3a8fb0"/></svg>
<span class="t" style="left:49px;top:24px;line-height:20px;font-size:15px;color:#bbbbbb;letter-spacing:0.237px;">app</span>
<svg class="b" style="left:13px;top:50.5px;" width="7.5" height="9" viewBox="0 0 7.5 9"><path d="M0 0l7.500 4.500-7.500 4.500z" fill="#a9acae"/></svg>
<svg class="b" style="left:31px;top:49.5px;" width="14" height="11" viewBox="0 0 14 11"><path d="M0 0h5.600l1.600 2H14v9H0z" fill="#87939a"/></svg>
<span class="t" style="left:49px;top:46px;line-height:20px;font-size:15px;color:#bbbbbb;letter-spacing:0.745px;">bootstrap</span>
<svg class="b" style="left:13px;top:72.5px;" width="7.5" height="9" viewBox="0 0 7.5 9"><path d="M0 0l7.500 4.500-7.500 4.500z" fill="#a9acae"/></svg>
<svg class="b" style="left:31px;top:71.5px;" width="14" height="11" viewBox="0 0 14 11"><path d="M0 0h5.600l1.600 2H14v9H0z" fill="#87939a"/></svg>
<span class="t" style="left:49px;top:68px;line-height:20px;font-size:15px;color:#bbbbbb;letter-spacing:0.695px;">config</span>
<svg class="b" style="left:13px;top:94.5px;" width="7.5" height="9" viewBox="0 0 7.5 9"><path d="M0 0l7.500 4.500-7.500 4.500z" fill="#a9acae"/></svg>
<svg class="b" style="left:31px;top:93.5px;" width="14" height="11" viewBox="0 0 14 11"><path d="M0 0h5.600l1.600 2H14v9H0z" fill="#87939a"/></svg>
<span class="t" style="left:49px;top:90px;line-height:20px;font-size:15px;color:#bbbbbb;letter-spacing:0.183px;">database</span>
<div class="b" style="left:0px;top:110px;width:335px;height:22px;background:#4b4a3d;"></div>
<svg class="b" style="left:13px;top:116.5px;" width="7.5" height="9" viewBox="0 0 7.5 9"><path d="M0 0l7.500 4.500-7.500 4.500z" fill="#a9acae"/></svg>
<svg class="b" style="left:31px;top:115.5px;" width="14" height="11" viewBox="0 0 14 11"><path d="M0 0h5.600l1.600 2H14v9H0z" fill="#87939a"/></svg>
<span class="t" style="left:49px;top:112px;line-height:20px;font-size:15px;color:#a5a500;letter-spacing:0.145px;">node_modules</span>
<span class="t" style="left:156px;top:112px;line-height:20px;font-size:15px;color:#8c8c8c;letter-spacing:0.513px;">library root</span>
<svg class="b" style="left:12.5px;top:139.5px;" width="10" height="7" viewBox="0 0 10 7"><path d="M0 0h10l-5 7z" fill="#a9acae"/></svg>
<svg class="b" style="left:31px;top:137.5px;" width="14" height="11" viewBox="0 0 14 11"><path d="M0 0h5.600l1.600 2H14v9H0z" fill="#87939a"/></svg>
<span class="t" style="left:49px;top:134px;line-height:20px;font-size:15px;color:#bbbbbb;letter-spacing:0.562px;">public</span>
<svg class="b" style="left:31px;top:160.5px;" width="7.5" height="9" viewBox="0 0 7.5 9"><path d="M0 0l7.500 4.500-7.500 4.500z" fill="#a9acae"/></svg>
<svg class="b" style="left:49px;top:159.5px;" width="14" height="11" viewBox="0 0 14 11"><path d="M0 0h5.600l1.600 2H14v9H0z" fill="#87939a"/></svg>
<span class="t" style="left:67px;top:156px;line-height:20px;font-size:15px;color:#bbbbbb;letter-spacing:-0.170px;">assets</span>
<svg class="b" style="left:31px;top:182.5px;" width="7.5" height="9" viewBox="0 0 7.5 9"><path d="M0 0l7.500 4.500-7.500 4.500z" fill="#a9acae"/></svg>
<svg class="b" style="left:49px;top:181.5px;" width="14" height="11" viewBox="0 0 14 11"><path d="M0 0h5.600l1.600 2H14v9H0z" fill="#87939a"/></svg>
<span class="t" style="left:67px;top:178px;line-height:20px;font-size:15px;color:#bbbbbb;letter-spacing:-1.000px;">css</span>
<svg class="b" style="left:31px;top:204.5px;" width="7.5" height="9" viewBox="0 0 7.5 9"><path d="M0 0l7.500 4.500-7.500 4.500z" fill="#a9acae"/></svg>
<svg class="b" style="left:49px;top:203.5px;" width="14" height="11" viewBox="0 0 14 11"><path d="M0 0h5.600l1.600 2H14v9H0z" fill="#87939a"/></svg>
<span class="t" style="left:67px;top:200px;line-height:20px;font-size:15px;color:#bbbbbb;letter-spacing:0.029px;">images</span>
<svg class="b" style="left:30.5px;top:227.5px;" width="10" height="7" viewBox="0 0 10 7"><path d="M0 0h10l-5 7z" fill="#a9acae"/></svg>
<svg class="b" style="left:49px;top:225.5px;" width="14" height="11" viewBox="0 0 14 11"><path d="M0 0h5.600l1.600 2H14v9H0z" fill="#87939a"/></svg>
<span class="t" style="left:67px;top:222px;line-height:20px;font-size:15px;color:#bbbbbb;letter-spacing:-0.333px;">js</span>
<div class="b" style="left:0px;top:242px;width:335px;height:22px;background:#0d293e;"></div>
<svg class="b" style="left:67px;top:245.5px;" width="15" height="15" viewBox="0 0 15 15"><path d="M6.300 0h6.200v8.500h-10v-4.700h3.800z" fill="#9aa7b0"/><path d="M5.300 0v2.800h-2.800z" fill="#9aa7b0"/><rect x="0" y="8.300" width="15" height="6.700" fill="#d0a23c"/><text x="1.600" y="14" font-size="6.500" font-weight="700" fill="#3a3320" font-family="Liberation Sans">JS</text></svg>
<span class="t" style="left:85px;top:244px;line-height:20px;font-size:15px;color:#6897bb;letter-spacing:0.095px;">app.js</span>
<svg class="b" style="left:31px;top:270.5px;" width="7.5" height="9" viewBox="0 0 7.5 9"><path d="M0 0l7.500 4.500-7.500 4.500z" fill="#a9acae"/></svg>
<svg class="b" style="left:49px;top:269.5px;" width="14" height="11" viewBox="0 0 14 11"><path d="M0 0h5.600l1.600 2H14v9H0z" fill="#87939a"/></svg>
<span class="t" style="left:67px;top:266px;line-height:20px;font-size:15px;color:#bbbbbb;letter-spacing:0.356px;">vendors</span>
<svg class="b" style="left:50.5px;top:290.3px;" width="13" height="14" viewBox="0 0 13 14"><path d="M4.300 0h6.700v13.500h-11v-9.200h4.300z" fill="#9aa7b0"/><path d="M3.300 0v3.300h-3.300z" fill="#9aa7b0"/><path d="M2.500 13.500c1-5 4-10.500 9.500-13-1 4.500-3.500 9.500-8 13z" fill="#d9372c"/><path d="M6 7c1.500-3 3.500-5.300 6-6.500-.7 3-2.300 6-4.300 8.300z" fill="#f29a2e"/><path d="M2.500 13.500c.5-2.500 1.500-4.500 3-6.500l1.700 1.800c-1.200 1.800-2.700 3.500-4.700 4.700z" fill="#a0257a"/></svg>
<span class="t" style="left:67px;top:288px;line-height:20px;font-size:15px;color:#6897bb;letter-spacing:-0.170px;">.htaccess</span>
<svg class="b" style="left:50.5px;top:312.3px;" width="11" height="13.5" viewBox="0 0 11 13.5"><path d="M4.300 0h6.700v13.500h-11v-9.200h4.300z" fill="#9aa7b0"/><path d="M3.300 0v3.300h-3.300z" fill="#9aa7b0"/><rect x="1.800" y="6" width="7.400" height="5.800" fill="#3c3f41"/><rect x="2.500" y="6.700" width="6" height="4.400" fill="#4a9fd8"/><path d="M2.500 11.100l2-2.500 1.500 1.500 1-1 1.500 2z" fill="#59a869"/></svg>
<span class="t" style="left:67px;top:310px;line-height:20px;font-size:15px;color:#6897bb;letter-spacing:0.313px;">favicon.ico</span>
<svg class="b" style="left:49px;top:333.7px;" width="15" height="15" viewBox="0 0 15 15"><path d="M6.300 0h6.200v8.500h-10v-4.700h3.800z" fill="#9aa7b0"/><path d="M5.300 0v2.800h-2.800z" fill="#9aa7b0"/><rect x="0" y="8.700" width="15" height="6.300" fill="#b07cd8"/><text x="0.400" y="14.200" font-size="6.200" font-weight="700" fill="#4a2a66" font-family="Liberation Sans" letter-spacing="-.2">PHP</text></svg>
<span class="t" style="left:67px;top:332px;line-height:20px;font-size:15px;color:#6897bb;letter-spacing:0.431px;">index.php</span>
<svg class="b" style="left:50.5px;top:356.3px;" width="14" height="13.5" viewBox="0 0 14 13.5"><path d="M4.300 0h6.700v13.500h-11v-9.200h4.300z" fill="#9aa7b0"/><path d="M3.300 0v3.300h-3.300z" fill="#9aa7b0"/><rect x="1.500" y="5" width="12.500" height="8" fill="#3c3f41"/><text x="1.200" y="12" font-size="8.200" fill="#c8ccd0" font-family="Liberation Sans" letter-spacing="-1.100">{()}</text></svg>
<span class="t" style="left:67px;top:354px;line-height:20px;font-size:15px;color:#6897bb;letter-spacing:0.331px;">mix-manifest.json</span>
<svg class="b" style="left:50.5px;top:378.3px;" width="11" height="13.5" viewBox="0 0 11 13.5"><path d="M4.300 0h6.700v13.500h-11v-9.200h4.300z" fill="#9aa7b0"/><path d="M3.300 0v3.300h-3.300z" fill="#9aa7b0"/><path d="M2 6.500h7M2 8.700h7M2 10.900h5" stroke="#3c3f41" stroke-width="1"/></svg>
<span class="t" style="left:67px;top:376px;line-height:20px;font-size:15px;color:#6897bb;letter-spacing:0.923px;">robots.txt</span>
<svg class="b" style="left:50.5px;top:400.3px;" width="11" height="13.5" viewBox="0 0 11 13.5"><path d="M4.300 0h6.700v13.500h-11v-9.200h4.300z" fill="#9aa7b0"/><path d="M3.300 0v3.300h-3.300z" fill="#9aa7b0"/><path d="M2 6.500h7M2 8.700h7M2 10.900h5" stroke="#3c3f41" stroke-width="1"/></svg>
<span class="t" style="left:67px;top:398px;line-height:20px;font-size:15px;color:#6897bb;letter-spacing:0.477px;">web.config</span>
<svg class="b" style="left:12.5px;top:425.5px;" width="10" height="7" viewBox="0 0 10 7"><path d="M0 0h10l-5 7z" fill="#a9acae"/></svg>
<svg class="b" style="left:31px;top:423.5px;" width="14" height="11" viewBox="0 0 14 11"><path d="M0 0h5.600l1.600 2H14v9H0z" fill="#87939a"/></svg>
<span class="t" style="left:49px;top:420px;line-height:20px;font-size:15px;color:#bbbbbb;letter-spacing:0.080px;">resources</span>
<svg class="b" style="left:30.5px;top:447.5px;" width="10" height="7" viewBox="0 0 10 7"><path d="M0 0h10l-5 7z" fill="#a9acae"/></svg>
<svg class="b" style="left:49px;top:445.5px;" width="14" height="11" viewBox="0 0 14 11"><path d="M0 0h5.600l1.600 2H14v9H0z" fill="#87939a"/></svg>
<span class="t" style="left:67px;top:442px;line-height:20px;font-size:15px;color:#bbbbbb;letter-spacing:-0.170px;">assets</span>
<svg class="b" style="left:48.5px;top:469.5px;" width="10" height="7" viewBox="0 0 10 7"><path d="M0 0h10l-5 7z" fill="#a9acae"/></svg>
<svg class="b" style="left:67px;top:467.5px;" width="14" height="11" viewBox="0 0 14 11"><path d="M0 0h5.600l1.600 2H14v9H0z" fill="#87939a"/></svg>
<span class="t" style="left:85px;top:464px;line-height:20px;font-size:15px;color:#bbbbbb;letter-spacing:-0.333px;">js</span>
<svg class="b" style="left:67px;top:490.5px;" width="7.5" height="9" viewBox="0 0 7.5 9"><path d="M0 0l7.500 4.500-7.500 4.500z" fill="#a9acae"/></svg>
<svg class="b" style="left:85px;top:489.5px;" width="14" height="11" viewBox="0 0 14 11"><path d="M0 0h5.600l1.600 2H14v9H0z" fill="#87939a"/></svg>
<span class="t" style="left:103px;top:486px;line-height:20px;font-size:15px;color:#bbbbbb;letter-spacing:0.365px;">components</span>
<svg class="b" style="left:67px;top:512.5px;" width="7.5" height="9" viewBox="0 0 7.5 9"><path d="M0 0l7.500 4.500-7.500 4.500z" fill="#a9acae"/></svg>
<svg class="b" style="left:85px;top:511.5px;" width="14" height="11" viewBox="0 0 14 11"><path d="M0 0h5.600l1.600 2H14v9H0z" fill="#87939a"/></svg>
<span class="t" style="left:103px;top:508px;line-height:20px;font-size:15px;color:#bbbbbb;letter-spacing:0.229px;">models</span>
<svg class="b" style="left:66.5px;top:535.5px;" width="10" height="7" viewBox="0 0 10 7"><path d="M0 0h10l-5 7z" fill="#a9acae"/></svg>
<svg class="b" style="left:85px;top:533.5px;" width="14" height="11" viewBox="0 0 14 11"><path d="M0 0h5.600l1.600 2H14v9H0z" fill="#87939a"/></svg>
<span class="t" style="left:103px;top:530px;line-height:20px;font-size:15px;color:#bbbbbb;letter-spacing:-0.217px;">pages</span>
<svg class="b" style="left:103px;top:555px;" width="14" height="12" viewBox="0 0 14 12"><path d="M0 0h2.800L7 7.300 11.200 0H14L7 12z" fill="#41b883"/><path d="M2.800 0h2.600L7 2.800 8.600 0h2.600L7 7.300z" fill="#35495e"/></svg>
<span class="t" style="left:121px;top:552px;line-height:20px;font-size:15px;color:#6897bb;letter-spacing:0.443px;">Districts.vue</span>
<svg class="b" style="left:103px;top:577px;" width="14" height="12" viewBox="0 0 14 12"><path d="M0 0h2.800L7 7.300 11.200 0H14L7 12z" fill="#41b883"/><path d="M2.800 0h2.600L7 2.800 8.600 0h2.600L7 7.300z" fill="#35495e"/></svg>
<span class="t" style="left:121px;top:574px;line-height:20px;font-size:15px;color:#6897bb;letter-spacing:0.315px;">Drivers.vue</span>
<svg class="b" style="left:103px;top:599px;" width="14" height="12" viewBox="0 0 14 12"><path d="M0 0h2.800L7 7.300 11.200 0H14L7 12z" fill="#41b883"/><path d="M2.800 0h2.600L7 2.800 8.600 0h2.600L7 7.300z" fill="#35495e"/></svg>
<span class="t" style="left:121px;top:596px;line-height:20px;font-size:15px;color:#6897bb;letter-spacing:0.234px;">Home.vue</span>
<svg class="b" style="left:104.5px;top:620.3px;" width="11" height="13.5" viewBox="0 0 11 13.5"><path d="M4.300 0h6.700v13.500h-11v-9.200h4.300z" fill="#9aa7b0"/><path d="M3.300 0v3.300h-3.300z" fill="#9aa7b0"/><path d="M2 6.500h7M2 8.700h7M2 10.900h5" stroke="#3c3f41" stroke-width="1"/></svg>
<span class="t" style="left:121px;top:618px;line-height:20px;font-size:15px;color:#6897bb;letter-spacing:0.162px;">Home.vue.bak</span>
<svg class="b" style="left:103px;top:643px;" width="14" height="12" viewBox="0 0 14 12"><path d="M0 0h2.800L7 7.300 11.200 0H14L7 12z" fill="#41b883"/><path d="M2.800 0h2.600L7 2.800 8.600 0h2.600L7 7.300z" fill="#35495e"/></svg>
<span class="t" style="left:121px;top:640px;line-height:20px;font-size:15px;color:#6897bb;letter-spacing:0.368px;">Login.vue</span>
<svg class="b" style="left:103px;top:665px;" width="14" height="12" viewBox="0 0 14 12"><path d="M0 0h2.800L7 7.300 11.200 0H14L7 12z" fill="#41b883"/><path d="M2.800 0h2.600L7 2.800 8.600 0h2.600L7 7.300z" fill="#35495e"/></svg>
<span class="t" style="left:121px;top:662px;line-height:20px;font-size:15px;color:#6897bb;letter-spacing:0.245px;">Map.vue</span>
<svg class="b" style="left:103px;top:687px;" width="14" height="12" viewBox="0 0 14 12"><path d="M0 0h2.800L7 7.300 11.200 0H14L7 12z" fill="#41b883"/><path d="M2.800 0h2.600L7 2.800 8.600 0h2.600L7 7.300z" fill="#35495e"/></svg>
<span class="t" style="left:121px;top:684px;line-height:20px;font-size:15px;color:#6897bb;letter-spacing:0.145px;">Parents.vue</span>
<svg class="b" style="left:103px;top:709px;" width="14" height="12" viewBox="0 0 14 12"><path d="M0 0h2.800L7 7.300 11.200 0H14L7 12z" fill="#41b883"/><path d="M2.800 0h2.600L7 2.800 8.600 0h2.600L7 7.300z" fill="#35495e"/></svg>
<span class="t" style="left:121px;top:706px;line-height:20px;font-size:15px;color:#6897bb;letter-spacing:0.021px;">PaymentSchedules.vue</span>
<svg class="b" style="left:103px;top:731px;" width="14" height="12" viewBox="0 0 14 12"><path d="M0 0h2.800L7 7.300 11.200 0H14L7 12z" fill="#41b883"/><path d="M2.800 0h2.600L7 2.800 8.600 0h2.600L7 7.300z" fill="#35495e"/></svg>
<span class="t" style="left:121px;top:728px;line-height:20px;font-size:15px;color:#6897bb;letter-spacing:0.125px;">Routes.vue</span>
<svg class="b" style="left:103px;top:753px;" width="14" height="12" viewBox="0 0 14 12"><path d="M0 0h2.800L7 7.300 11.200 0H14L7 12z" fill="#41b883"/><path d="M2.800 0h2.600L7 2.800 8.600 0h2.600L7 7.300z" fill="#35495e"/></svg>
<span class="t" style="left:121px;top:750px;line-height:20px;font-size:15px;color:#6897bb;letter-spacing:0.313px;">Students.vue</span>
<svg class="b" style="left:103px;top:775px;" width="14" height="12" viewBox="0 0 14 12"><path d="M0 0h2.800L7 7.300 11.200 0H14L7 12z" fill="#41b883"/><path d="M2.800 0h2.600L7 2.800 8.600 0h2.600L7 7.300z" fill="#35495e"/></svg>
<span class="t" style="left:121px;top:772px;line-height:20px;font-size:15px;color:#6897bb;letter-spacing:-0.107px;">Teachers.vue</span>
<svg class="b" style="left:103px;top:797px;" width="14" height="12" viewBox="0 0 14 12"><path d="M0 0h2.800L7 7.300 11.200 0H14L7 12z" fill="#41b883"/><path d="M2.800 0h2.600L7 2.800 8.600 0h2.600L7 7.300z" fill="#35495e"/></svg>
<span class="t" style="left:121px;top:794px;line-height:20px;font-size:15px;color:#6897bb;letter-spacing:-0.023px;">Times.vue</span>
<svg class="b" style="left:67px;top:820.5px;" width="7.5" height="9" viewBox="0 0 7.5 9"><path d="M0 0l7.500 4.500-7.500 4.500z" fill="#a9acae"/></svg>
<svg class="b" style="left:85px;top:819.5px;" width="14" height="11" viewBox="0 0 14 11"><path d="M0 0h5.600l1.600 2H14v9H0z" fill="#87939a"/></svg>
<span class="t" style="left:103px;top:816px;line-height:20px;font-size:15px;color:#bbbbbb;letter-spacing:0.248px;">views</span>
<svg class="b" style="left:85px;top:839.5px;" width="15" height="15" viewBox="0 0 15 15"><path d="M6.300 0h6.200v8.500h-10v-4.700h3.800z" fill="#9aa7b0"/><path d="M5.300 0v2.800h-2.800z" fill="#9aa7b0"/><rect x="0" y="8.300" width="15" height="6.700" fill="#d0a23c"/><text x="1.600" y="14" font-size="6.500" font-weight="700" fill="#3a3320" font-family="Liberation Sans">JS</text></svg>
<span class="t" style="left:103px;top:838px;line-height:20px;font-size:15px;color:#6897bb;letter-spacing:0.055px;">app.js</span>
<svg class="b" style="left:70px;top:864.5px;" width="7.5" height="9" viewBox="0 0 7.5 9"><path d="M0 0l7.500 4.500-7.500 4.500z" fill="#a9acae"/></svg>
<svg class="b" style="left:90px;top:861.5px;" width="15" height="15" viewBox="0 0 15 15"><path d="M6.300 0h6.200v8.500h-10v-4.700h3.800z" fill="#9aa7b0"/><path d="M5.300 0v2.800h-2.800z" fill="#9aa7b0"/><rect x="0" y="8.300" width="15" height="6.700" fill="#3a8fb0"/><text x="1.600" y="14" font-size="6.500" font-weight="700" fill="#3a3320" font-family="Liberation Sans">TS</text></svg>
<span class="t" style="left:103px;top:860px;line-height:20px;font-size:15px;color:#6897bb;letter-spacing:0.601px;">Auth.ts</span>
<div class="b" style="left:326px;top:1px;width:8px;height:503px;background:rgba(255,255,255,.14);"></div>
<div class="b" style="left:7px;top:865px;width:235px;height:8px;background:rgba(120,122,124,.55);"></div>
</div>
<div class="b" style="left:425px;top:133px;width:1px;height:56px;background:#2f3133;"></div>
<!-- editor -->
<div class="b" style="left:426px;top:133px;width:1472px;height:27px;background:#3c3f41;"></div>
<div class="b" style="left:426px;top:133px;width:121px;height:27px;background:#4e5254;"></div>
<div class="b" style="left:426px;top:157px;width:121px;height:3px;background:#4a88c7;"></div>
<svg class="b" style="left:435px;top:141px;" width="14" height="12" viewBox="0 0 14 12"><path d="M0 0h2.800L7 7.300 11.200 0H14L7 12z" fill="#41b883"/><path d="M2.800 0h2.600L7 2.800 8.600 0h2.600L7 7.300z" fill="#35495e"/></svg>
<span class="t" style="left:454.5px;top:137px;line-height:20px;font-size:15px;color:#6897bb;letter-spacing:0.091px;">Home.vue</span>
<svg class="b" style="left:530.5px;top:141.5px;" width="9" height="9" viewBox="0 0 9 9"><path d="M0.800 0.800l7.400 7.400M8.200 0.800l-7.400 7.400" stroke="#7a7d7f" stroke-width="1"/></svg>
<svg class="b" style="left:555px;top:139px;" width="14" height="14" viewBox="0 0 14 14"><circle cx="7" cy="7" r="7" fill="#3a8fb0"/><path d="M9.300 5.200a2.800 2.800 0 1 0 0 3.600" stroke="#26343c" stroke-width="1.300" fill="none"/></svg>
<span class="t" style="left:574.5px;top:137px;line-height:20px;font-size:15px;color:#6897bb;letter-spacing:-0.052px;">User.php</span>
<svg class="b" style="left:642.5px;top:141.5px;" width="9" height="9" viewBox="0 0 9 9"><path d="M0.800 0.800l7.400 7.400M8.200 0.800l-7.400 7.400" stroke="#7a7d7f" stroke-width="1"/></svg>
<svg class="b" style="left:667px;top:139px;" width="14" height="14" viewBox="0 0 14 14"><circle cx="7" cy="7" r="7" fill="#3a8fb0"/><path d="M9.300 5.200a2.800 2.800 0 1 0 0 3.600" stroke="#26343c" stroke-width="1.300" fill="none"/></svg>
<span class="t" style="left:686.5px;top:137px;line-height:20px;font-size:15px;color:#6897bb;letter-spacing:-0.081px;">UserMapPageResource.php</span>
<svg class="b" style="left:882px;top:141.5px;" width="9" height="9" viewBox="0 0 9 9"><path d="M0.800 0.800l7.400 7.400M8.200 0.800l-7.400 7.400" stroke="#7a7d7f" stroke-width="1"/></svg>
<svg class="b" style="left:906px;top:141px;" width="14" height="12" viewBox="0 0 14 12"><path d="M0 0h2.800L7 7.300 11.200 0H14L7 12z" fill="#41b883"/><path d="M2.800 0h2.600L7 2.800 8.600 0h2.600L7 7.300z" fill="#35495e"/></svg>
<span class="t" style="left:925.5px;top:137px;line-height:20px;font-size:15px;color:#6897bb;letter-spacing:0.111px;">Map.vue</span>
<svg class="b" style="left:990.5px;top:141.5px;" width="9" height="9" viewBox="0 0 9 9"><path d="M0.800 0.800l7.400 7.400M8.200 0.800l-7.400 7.400" stroke="#7a7d7f" stroke-width="1"/></svg>
<svg class="b" style="left:1015.7px;top:141px;" width="14" height="12" viewBox="0 0 14 12"><path d="M0 0h2.800L7 7.300 11.200 0H14L7 12z" fill="#41b883"/><path d="M2.800 0h2.600L7 2.800 8.600 0h2.600L7 7.300z" fill="#35495e"/></svg>
<span class="t" style="left:1035px;top:137px;line-height:20px;font-size:15px;color:#6897bb;letter-spacing:0.018px;">TeacherModal.vue</span>
<svg class="b" style="left:1166.5px;top:141.5px;" width="9" height="9" viewBox="0 0 9 9"><path d="M0.800 0.800l7.400 7.400M8.200 0.800l-7.400 7.400" stroke="#7a7d7f" stroke-width="1"/></svg>
<svg class="b" style="left:1191px;top:141px;" width="14" height="12" viewBox="0 0 14 12"><path d="M0 0h2.800L7 7.300 11.200 0H14L7 12z" fill="#41b883"/><path d="M2.800 0h2.600L7 2.800 8.600 0h2.600L7 7.300z" fill="#35495e"/></svg>
<span class="t" style="left:1210.5px;top:137px;line-height:20px;font-size:15px;color:#6897bb;letter-spacing:0.036px;">Routes.vue</span>
<svg class="b" style="left:1293.5px;top:141.5px;" width="9" height="9" viewBox="0 0 9 9"><path d="M0.800 0.800l7.400 7.400M8.200 0.800l-7.400 7.400" stroke="#7a7d7f" stroke-width="1"/></svg>
<svg class="b" style="left:1319.5px;top:140px;" width="11" height="13.5" viewBox="0 0 11 13.5"><path d="M4.300 0h6.700v13.500h-11v-9.200h4.300z" fill="#9aa7b0"/><path d="M3.300 0v3.300h-3.300z" fill="#9aa7b0"/><path d="M2 6.500h7M2 8.700h7M2 10.900h5" stroke="#3c3f41" stroke-width="1"/></svg>
<span class="t" style="left:1337px;top:137px;line-height:20px;font-size:15px;color:#a5a532;letter-spacing:0.049px;">.env</span>
<svg class="b" style="left:1372.5px;top:141.5px;" width="9" height="9" viewBox="0 0 9 9"><path d="M0.800 0.800l7.400 7.400M8.200 0.800l-7.400 7.400" stroke="#7a7d7f" stroke-width="1"/></svg>
<svg class="b" style="left:1397.5px;top:141px;" width="14" height="12" viewBox="0 0 14 12"><path d="M0 0h2.800L7 7.300 11.200 0H14L7 12z" fill="#41b883"/><path d="M2.800 0h2.600L7 2.800 8.600 0h2.600L7 7.300z" fill="#35495e"/></svg>
<span class="t" style="left:1416px;top:137px;line-height:20px;font-size:15px;color:#6897bb;letter-spacing:0.392px;">StudentModal.vue</span>
<svg class="b" style="left:1549.5px;top:141.5px;" width="9" height="9" viewBox="0 0 9 9"><path d="M0.800 0.800l7.400 7.400M8.200 0.800l-7.400 7.400" stroke="#7a7d7f" stroke-width="1"/></svg>
<svg class="b" style="left:1573.5px;top:139.5px;" width="15" height="15" viewBox="0 0 15 15"><path d="M6.300 0h6.200v8.500h-10v-4.700h3.800z" fill="#9aa7b0"/><path d="M5.300 0v2.800h-2.800z" fill="#9aa7b0"/><rect x="0" y="8.300" width="15" height="6.700" fill="#d0a23c"/><text x="1.600" y="14" font-size="6.500" font-weight="700" fill="#3a3320" font-family="Liberation Sans">JS</text></svg>
<span class="t" style="left:1593px;top:137px;line-height:20px;font-size:15px;color:#6897bb;letter-spacing:0.210px;">site.js</span>
<svg class="b" style="left:1639.5px;top:141.5px;" width="9" height="9" viewBox="0 0 9 9"><path d="M0.800 0.800l7.400 7.400M8.200 0.800l-7.400 7.400" stroke="#7a7d7f" stroke-width="1"/></svg>
<svg class="b" style="left:1664px;top:139.5px;" width="15" height="15" viewBox="0 0 15 15"><path d="M6.300 0h6.200v8.500h-10v-4.700h3.800z" fill="#9aa7b0"/><path d="M5.300 0v2.800h-2.800z" fill="#9aa7b0"/><path d="M0 8.300h15v6.700h-15z" fill="#f0532d"/><path d="M0 11.500l6-1 4 3 5-3.500M6 10.500l1 4.500" stroke="#3c3f41" stroke-width=".8" fill="none"/></svg>
<span class="t" style="left:1683px;top:137px;line-height:20px;font-size:15px;color:#6897bb;letter-spacing:0.118px;">choose-address.blade.php</span>
<svg class="b" style="left:1869.2px;top:141.5px;" width="9" height="9" viewBox="0 0 9 9"><path d="M0.800 0.800l7.400 7.400M8.200 0.800l-7.400 7.400" stroke="#7a7d7f" stroke-width="1"/></svg>
<div class="b" style="left:436px;top:164px;width:353px;height:20.5px;background:#45494a;box-sizing:border-box;border:1px solid #646464;border-radius:3px"></div>
<svg class="b" style="left:438.3px;top:167.5px;" width="18" height="14" viewBox="0 0 18 14"><circle cx="5.500" cy="6" r="4.300" stroke="#9a9da0" stroke-width="1.100" fill="none"/><path d="M8.700 9.200l3.300 3.300" stroke="#9a9da0" stroke-width="1.300"/><path d="M12 6.500h4l-2 2.300z" fill="#9a9da0"/></svg>
<span class="t m" style="left:461px;top:165px;line-height:20px;font-size:14.800px;color:#bbbbbb">additi</span>
<svg class="b" style="left:746px;top:168px;" width="12" height="12" viewBox="0 0 12 12"><path d="M1 2.500h7a2.800 2.800 0 0 1 0 5.600h-6" stroke="#6e7173" stroke-width="1.200" fill="none"/><path d="M4.500 5.500l-2.700 2.600 2.700 2.600" stroke="#6e7173" stroke-width="1.200" fill="none"/></svg>
<svg class="b" style="left:773.5px;top:170.5px;" width="9" height="9" viewBox="0 0 9 9"><path d="M0.800 0.800l7.400 7.400M8.200 0.800l-7.400 7.400" stroke="#6e7173" stroke-width="1"/></svg>
<svg class="b" style="left:807.5px;top:167.5px;" width="10" height="13" viewBox="0 0 10 13"><path d="M5 13v-11.500M0.800 5.500l4.200-4.200 4.200 4.200" stroke="#afb1b3" stroke-width="1.900" fill="none"/></svg>
<svg class="b" style="left:834px;top:167.5px;" width="10" height="13" viewBox="0 0 10 13"><path d="M5 0v11.500M0.800 7.500l4.200 4.200 4.200-4.200" stroke="#afb1b3" stroke-width="1.900" fill="none"/></svg>
<svg class="b" style="left:857px;top:167px;" width="16" height="16" viewBox="0 0 16 16"><circle cx="6.500" cy="6.500" r="4.800" stroke="#afb1b3" stroke-width="1.700" fill="none"/><path d="M10 10l4.500 4.500" stroke="#afb1b3" stroke-width="1.800"/><text x="1" y="15.500" font-size="5" fill="#afb1b3" font-family="Liberation Sans">ALL</text></svg>
<div class="b" style="left:881px;top:164px;width:1px;height:20px;background:#555759;"></div>
<svg class="b" style="left:891px;top:166px;" width="16" height="16" viewBox="0 0 16 16"><path d="M4.500 0.500v8M0.500 4.500h8" stroke="#afb1b3" stroke-width="1.800"/><path d="M10 7.500v7M13.5 7.500v7M9 7.500h2M12.5 7.500h2M9 14.500h2M12.5 14.500h2" stroke="#afb1b3" stroke-width=".9"/></svg>
<svg class="b" style="left:917px;top:166px;" width="16" height="16" viewBox="0 0 16 16"><path d="M0.500 4.500h8" stroke="#afb1b3" stroke-width="1.800"/><path d="M10 7.500v7M13.5 7.500v7M9 7.500h2M12.5 7.500h2M9 14.500h2M12.5 14.500h2" stroke="#afb1b3" stroke-width=".9"/></svg>
<svg class="b" style="left:942px;top:166.5px;" width="17" height="16" viewBox="0 0 17 16"><rect x="0.600" y="1" width="7" height="6" fill="none" stroke="#afb1b3" stroke-width="1"/><path d="M2 3.800l1.800 1.800 4-4.600" stroke="#afb1b3" stroke-width="1.100" fill="none"/><path d="M11 7.500v7M14.5 7.500v7M10 7.500h2M13.5 7.500h2M10 14.500h2M13.5 14.500h2" stroke="#afb1b3" stroke-width=".9"/></svg>
<div class="b" style="left:966px;top:164px;width:1px;height:20px;background:#555759;"></div>
<svg class="b" style="left:976.5px;top:167.5px;" width="15" height="14" viewBox="0 0 15 14"><path d="M0 0h12l-4.500 5.500v7l-3-2v-5z" fill="#afb1b3"/><path d="M10 10.500h4.500l-2.250 2.600z" fill="#afb1b3"/></svg>
<div class="b" style="left:1015px;top:166.8px;width:14px;height:14px;background:#43494a;box-sizing:border-box;border:1px solid #6b6b6b;border-radius:2px"></div>
<span class="t" style="left:1035.5px;top:165px;line-height:20px;font-size:13px;color:#bbbbbb;letter-spacing:-0.351px;">Match Case</span>
<div class="b" style="left:1114px;top:166.8px;width:14px;height:14px;background:#43494a;box-sizing:border-box;border:1px solid #6b6b6b;border-radius:2px"></div>
<span class="t" style="left:1134px;top:165px;line-height:20px;font-size:13px;color:#bbbbbb;letter-spacing:0.235px;">Words</span>
<div class="b" style="left:1185px;top:166.8px;width:14px;height:14px;background:#43494a;box-sizing:border-box;border:1px solid #6b6b6b;border-radius:2px"></div>
<span class="t" style="left:1205.5px;top:165px;line-height:20px;font-size:13px;color:#bbbbbb;letter-spacing:-0.520px;">Regex</span>
<span class="t" style="left:1250.5px;top:165px;line-height:20px;font-size:13px;color:#4a88c7;font-weight:700;">?</span>
<span class="t" style="left:1277.5px;top:165.5px;line-height:20px;font-size:13.5px;color:#bbbbbb;font-weight:700;letter-spacing:-0.442px;">2 matches</span>
<svg class="b" style="left:1882.5px;top:165.5px;" width="9" height="9" viewBox="0 0 9 9"><path d="M0.800 0.800l7.400 7.400M8.200 0.800l-7.400 7.400" stroke="#8a8d8f" stroke-width="1"/></svg>
<div class="b m" style="left:426px;top:189px;width:1472px;height:820px;background:#2b2b2b;overflow:hidden;font-size:11.665px">
<div class="b" style="left:0px;top:0px;width:62.5px;height:820px;background:#313335;"></div>
<div class="b" style="left:0px;top:274px;width:1472px;height:18px;background:#323232;"></div>
<div class="b" style="left:907px;top:0px;width:1px;height:820px;background:#4f4f4f;"></div>
<div class="b" style="left:97px;top:0px;width:1px;height:820px;background:#3f3f3f;"></div>
<div class="b" style="left:125px;top:0px;width:1px;height:820px;background:#3f3f3f;"></div>
<div class="b" style="left:153px;top:0px;width:1px;height:820px;background:#3f3f3f;"></div>
<div class="b" style="left:181px;top:0px;width:1px;height:820px;background:#3f3f3f;"></div>
<div class="b" style="left:209px;top:0px;width:1px;height:820px;background:#3f3f3f;"></div>
<div class="b" style="left:237px;top:0px;width:1px;height:820px;background:#3f3f3f;"></div>
<div class="b" style="left:265px;top:0px;width:1px;height:40px;background:#3f3f3f;"></div>
<div class="b" style="left:265px;top:76px;width:1px;height:18px;background:#3f3f3f;"></div>
<div class="b" style="left:265px;top:130px;width:1px;height:18px;background:#3f3f3f;"></div>
<div class="b" style="left:265px;top:184px;width:1px;height:72px;background:#3f3f3f;"></div>
<div class="b" style="left:265px;top:292px;width:1px;height:108px;background:#3f3f3f;"></div>
<div class="b" style="left:265px;top:436px;width:1px;height:396px;background:#3f3f3f;"></div>
<div class="b" style="left:293px;top:0px;width:1px;height:22px;background:#3f3f3f;"></div>
<div class="b" style="left:293px;top:202px;width:1px;height:36px;background:#3f3f3f;"></div>
<div class="b" style="left:293px;top:328px;width:1px;height:54px;background:#3f3f3f;"></div>
<div class="b" style="left:293px;top:454px;width:1px;height:378px;background:#3f3f3f;"></div>
<div class="b" style="left:321px;top:472px;width:1px;height:90px;background:#3f3f3f;"></div>
<div class="b" style="left:321px;top:598px;width:1px;height:90px;background:#3f3f3f;"></div>
<div class="b" style="left:321px;top:724px;width:1px;height:108px;background:#3f3f3f;"></div>
<div class="b" style="left:349px;top:796px;width:1px;height:36px;background:#3f3f3f;"></div>
<div class="b" style="left:52px;top:0px;width:2px;height:274px;background:#e6e07e;"></div>
<div class="b" style="left:52px;top:274px;width:2px;height:144px;background:#f09898;"></div>
<div class="b" style="left:52px;top:418px;width:2px;height:420px;background:#e6e07e;"></div>
<div class="b" style="left:54px;top:274px;width:8px;height:18px;background:#354a5b;"></div>
<div class="b" style="left:54px;top:202px;width:8px;height:36px;background:#4a4537;"></div>
<div class="b" style="left:54px;top:472px;width:8px;height:72px;background:#4a4537;"></div>
<div class="b" style="left:54px;top:598px;width:8px;height:72px;background:#4a4537;"></div>
<div class="b" style="left:54px;top:724px;width:8px;height:54px;background:#4a4537;"></div>
<div class="b" style="left:54px;top:796px;width:8px;height:36px;background:#4a4537;"></div>
<div class="b" style="left:62px;top:0px;width:1px;height:820px;background:#5e6163;"></div>
<svg class="b" style="left:59px;top:26px;" preserveAspectRatio="none" width="7.2" height="10" viewBox="0 0 8 10"><path d="M0.500 9.500v-5.500l3.500-3.500 3.500 3.500v5.500z" fill="#313335" stroke="#6e7173" stroke-width="1"/><path d="M1 6.500h6" stroke="#6e7173" stroke-width="1"/></svg>
<svg class="b" style="left:59px;top:44px;" preserveAspectRatio="none" width="7.2" height="10" viewBox="0 0 8 10"><path d="M0.500 9.500v-5.500l3.500-3.500 3.500 3.500v5.500z" fill="#313335" stroke="#6e7173" stroke-width="1"/><path d="M1 6.500h6" stroke="#6e7173" stroke-width="1"/></svg>
<svg class="b" style="left:59px;top:65px;" preserveAspectRatio="none" width="7.2" height="10" viewBox="0 0 8 10"><path d="M0.500 0.500v5.500l3.500 3.500 3.500-3.500v-5.500z" fill="#313335" stroke="#6e7173" stroke-width="1"/><path d="M1 3.500h6" stroke="#6e7173" stroke-width="1"/></svg>
<svg class="b" style="left:59px;top:98px;" preserveAspectRatio="none" width="7.2" height="10" viewBox="0 0 8 10"><path d="M0.500 9.500v-5.500l3.500-3.500 3.500 3.500v5.500z" fill="#313335" stroke="#6e7173" stroke-width="1"/><path d="M1 6.500h6" stroke="#6e7173" stroke-width="1"/></svg>
<svg class="b" style="left:59px;top:119px;" preserveAspectRatio="none" width="7.2" height="10" viewBox="0 0 8 10"><path d="M0.500 0.500v5.500l3.500 3.500 3.500-3.500v-5.500z" fill="#313335" stroke="#6e7173" stroke-width="1"/><path d="M1 3.500h6" stroke="#6e7173" stroke-width="1"/></svg>
<svg class="b" style="left:59px;top:152px;" preserveAspectRatio="none" width="7.2" height="10" viewBox="0 0 8 10"><path d="M0.500 9.500v-5.500l3.500-3.500 3.500 3.500v5.500z" fill="#313335" stroke="#6e7173" stroke-width="1"/><path d="M1 6.500h6" stroke="#6e7173" stroke-width="1"/></svg>
<svg class="b" style="left:59px;top:173px;" preserveAspectRatio="none" width="7.2" height="10" viewBox="0 0 8 10"><path d="M0.500 0.500v5.500l3.500 3.500 3.500-3.500v-5.500z" fill="#313335" stroke="#6e7173" stroke-width="1"/><path d="M1 3.500h6" stroke="#6e7173" stroke-width="1"/></svg>
<svg class="b" style="left:59px;top:191px;" preserveAspectRatio="none" width="7.2" height="10" viewBox="0 0 8 10"><path d="M0.500 0.500v5.500l3.500 3.500 3.500-3.500v-5.500z" fill="#313335" stroke="#6e7173" stroke-width="1"/><path d="M1 3.500h6" stroke="#6e7173" stroke-width="1"/></svg>
<svg class="b" style="left:59px;top:242px;" preserveAspectRatio="none" width="7.2" height="10" viewBox="0 0 8 10"><path d="M0.500 9.500v-5.500l3.500-3.500 3.500 3.500v5.500z" fill="#313335" stroke="#6e7173" stroke-width="1"/><path d="M1 6.500h6" stroke="#6e7173" stroke-width="1"/></svg>
<svg class="b" style="left:59px;top:260px;" preserveAspectRatio="none" width="7.2" height="10" viewBox="0 0 8 10"><path d="M0.500 9.500v-5.500l3.500-3.500 3.500 3.500v5.500z" fill="#313335" stroke="#6e7173" stroke-width="1"/><path d="M1 6.500h6" stroke="#6e7173" stroke-width="1"/></svg>
<svg class="b" style="left:59px;top:281px;" preserveAspectRatio="none" width="7.2" height="10" viewBox="0 0 8 10"><path d="M0.500 0.500v5.500l3.500 3.500 3.500-3.500v-5.500z" fill="#313335" stroke="#6e7173" stroke-width="1"/><path d="M1 3.500h6" stroke="#6e7173" stroke-width="1"/></svg>
<svg class="b" style="left:59px;top:317px;" preserveAspectRatio="none" width="7.2" height="10" viewBox="0 0 8 10"><path d="M0.500 0.500v5.500l3.500 3.500 3.500-3.500v-5.500z" fill="#313335" stroke="#6e7173" stroke-width="1"/><path d="M1 3.500h6" stroke="#6e7173" stroke-width="1"/></svg>
<svg class="b" style="left:59px;top:386px;" preserveAspectRatio="none" width="7.2" height="10" viewBox="0 0 8 10"><path d="M0.500 9.500v-5.500l3.500-3.500 3.500 3.500v5.500z" fill="#313335" stroke="#6e7173" stroke-width="1"/><path d="M1 6.500h6" stroke="#6e7173" stroke-width="1"/></svg>
<svg class="b" style="left:59px;top:404px;" preserveAspectRatio="none" width="7.2" height="10" viewBox="0 0 8 10"><path d="M0.500 9.500v-5.500l3.500-3.500 3.500 3.500v5.500z" fill="#313335" stroke="#6e7173" stroke-width="1"/><path d="M1 6.500h6" stroke="#6e7173" stroke-width="1"/></svg>
<svg class="b" style="left:59px;top:425px;" preserveAspectRatio="none" width="7.2" height="10" viewBox="0 0 8 10"><path d="M0.500 0.500v5.500l3.500 3.500 3.500-3.500v-5.500z" fill="#313335" stroke="#6e7173" stroke-width="1"/><path d="M1 3.500h6" stroke="#6e7173" stroke-width="1"/></svg>
<svg class="b" style="left:59px;top:443px;" preserveAspectRatio="none" width="7.2" height="10" viewBox="0 0 8 10"><path d="M0.500 0.500v5.500l3.500 3.500 3.500-3.500v-5.500z" fill="#313335" stroke="#6e7173" stroke-width="1"/><path d="M1 3.500h6" stroke="#6e7173" stroke-width="1"/></svg>
<svg class="b" style="left:59px;top:461px;" preserveAspectRatio="none" width="7.2" height="10" viewBox="0 0 8 10"><path d="M0.500 0.500v5.500l3.500 3.500 3.500-3.500v-5.500z" fill="#313335" stroke="#6e7173" stroke-width="1"/><path d="M1 3.500h6" stroke="#6e7173" stroke-width="1"/></svg>
<svg class="b" style="left:59px;top:566px;" preserveAspectRatio="none" width="7.2" height="10" viewBox="0 0 8 10"><path d="M0.500 9.500v-5.500l3.500-3.500 3.500 3.500v5.500z" fill="#313335" stroke="#6e7173" stroke-width="1"/><path d="M1 6.500h6" stroke="#6e7173" stroke-width="1"/></svg>
<svg class="b" style="left:59px;top:587px;" preserveAspectRatio="none" width="7.2" height="10" viewBox="0 0 8 10"><path d="M0.500 0.500v5.500l3.500 3.500 3.500-3.500v-5.500z" fill="#313335" stroke="#6e7173" stroke-width="1"/><path d="M1 3.500h6" stroke="#6e7173" stroke-width="1"/></svg>
<svg class="b" style="left:59px;top:692px;" preserveAspectRatio="none" width="7.2" height="10" viewBox="0 0 8 10"><path d="M0.500 9.500v-5.500l3.500-3.500 3.500 3.500v5.500z" fill="#313335" stroke="#6e7173" stroke-width="1"/><path d="M1 6.500h6" stroke="#6e7173" stroke-width="1"/></svg>
<svg class="b" style="left:59px;top:713px;" preserveAspectRatio="none" width="7.2" height="10" viewBox="0 0 8 10"><path d="M0.500 0.500v5.500l3.500 3.500 3.500-3.500v-5.500z" fill="#313335" stroke="#6e7173" stroke-width="1"/><path d="M1 3.500h6" stroke="#6e7173" stroke-width="1"/></svg>
<svg class="b" style="left:59px;top:785px;" preserveAspectRatio="none" width="7.2" height="10" viewBox="0 0 8 10"><path d="M0.500 0.500v5.500l3.500 3.500 3.500-3.500v-5.500z" fill="#313335" stroke="#6e7173" stroke-width="1"/><path d="M1 3.500h6" stroke="#6e7173" stroke-width="1"/></svg>
<i class="b wv" style="left:508px;top:18.5px;width:42px"></i>
<div class="b" style="left:333px;top:58px;width:28px;height:18px;background:#344134;"></div>
<div class="b" style="left:333px;top:112px;width:28px;height:18px;background:#344134;"></div>
<div class="b" style="left:305px;top:130px;width:7px;height:18px;background:#344134;"></div>
<div class="b" style="left:312px;top:130px;width:28px;height:18px;background:#344134;"></div>
<div class="b" style="left:340px;top:130px;width:7px;height:18px;background:#344134;"></div>
<div class="b" style="left:347px;top:130px;width:28px;height:18px;background:#344134;"></div>
<div class="b" style="left:375px;top:130px;width:7px;height:18px;background:#344134;"></div>
<div class="b" style="left:382px;top:130px;width:70px;height:18px;background:#344134;"></div>
<div class="b" style="left:452px;top:130px;width:7px;height:18px;background:#344134;"></div>
<div class="b" style="left:508px;top:130px;width:7px;height:18px;background:#344134;"></div>
<div class="b" style="left:515px;top:130px;width:28px;height:18px;background:#344134;"></div>
<div class="b" style="left:543px;top:130px;width:7px;height:18px;background:#344134;"></div>
<div class="b" style="left:550px;top:130px;width:28px;height:18px;background:#344134;"></div>
<div class="b" style="left:578px;top:130px;width:7px;height:18px;background:#344134;"></div>
<div class="b" style="left:585px;top:130px;width:56px;height:18px;background:#344134;"></div>
<div class="b" style="left:641px;top:130px;width:7px;height:18px;background:#344134;"></div>
<div class="b" style="left:333px;top:166px;width:28px;height:18px;background:#344134;"></div>
<i class="b wv" style="left:487px;top:180.5px;width:21px"></i>
<i class="b wv" style="left:634px;top:216.5px;width:21px"></i>
<i class="b wv" style="left:501px;top:234.5px;width:42px"></i>
<i class="b wv" style="left:557px;top:234.5px;width:21px"></i>
<div class="b" style="left:263px;top:274px;width:63px;height:18px;background:#472c2c;"></div>
<div class="b" style="left:347px;top:274px;width:28px;height:18px;background:#344134;"></div>
<div class="b" style="left:424px;top:274px;width:42px;height:18px;background:#32593d;box-sizing:border-box;border:1px solid #a3a3a3"></div>
<i class="b wv" style="left:627px;top:288.5px;width:21px"></i>
<div class="b" style="left:529px;top:292px;width:7px;height:18px;background:#344134;"></div>
<div class="b" style="left:536px;top:292px;width:21px;height:18px;background:#344134;"></div>
<div class="b" style="left:557px;top:292px;width:7px;height:18px;background:#344134;"></div>
<div class="b" style="left:564px;top:292px;width:28px;height:18px;background:#344134;"></div>
<div class="b" style="left:592px;top:292px;width:7px;height:18px;background:#344134;"></div>
<div class="b" style="left:599px;top:292px;width:63px;height:18px;background:#344134;"></div>
<div class="b" style="left:662px;top:292px;width:7px;height:18px;background:#344134;"></div>
<i class="b wv" style="left:375px;top:324.5px;width:21px"></i>
<i class="b wv" style="left:515px;top:342.5px;width:21px"></i>
<div class="b" style="left:711px;top:328px;width:7px;height:18px;background:#344134;"></div>
<div class="b" style="left:718px;top:328px;width:21px;height:18px;background:#344134;"></div>
<div class="b" style="left:739px;top:328px;width:7px;height:18px;background:#344134;"></div>
<div class="b" style="left:746px;top:328px;width:28px;height:18px;background:#344134;"></div>
<div class="b" style="left:774px;top:328px;width:7px;height:18px;background:#344134;"></div>
<div class="b" style="left:781px;top:328px;width:42px;height:18px;background:#344134;"></div>
<div class="b" style="left:823px;top:328px;width:7px;height:18px;background:#344134;"></div>
<div class="b" style="left:830px;top:328px;width:63px;height:18px;background:#344134;"></div>
<div class="b" style="left:893px;top:328px;width:21px;height:18px;background:#344134;"></div>
<div class="b" style="left:914px;top:328px;width:21px;height:18px;background:#344134;"></div>
<div class="b" style="left:935px;top:328px;width:21px;height:18px;background:#344134;"></div>
<div class="b" style="left:956px;top:328px;width:21px;height:18px;background:#344134;"></div>
<div class="b" style="left:977px;top:328px;width:7px;height:18px;background:#344134;"></div>
<div class="b" style="left:984px;top:328px;width:28px;height:18px;background:#344134;"></div>
<div class="b" style="left:1012px;top:328px;width:7px;height:18px;background:#344134;"></div>
<div class="b" style="left:1019px;top:328px;width:42px;height:18px;background:#344134;"></div>
<div class="b" style="left:1061px;top:328px;width:7px;height:18px;background:#344134;"></div>
<div class="b" style="left:1068px;top:328px;width:56px;height:18px;background:#344134;"></div>
<div class="b" style="left:1124px;top:328px;width:7px;height:18px;background:#344134;"></div>
<div class="b" style="left:1173px;top:328px;width:7px;height:18px;background:#344134;"></div>
<div class="b" style="left:1180px;top:328px;width:21px;height:18px;background:#344134;"></div>
<div class="b" style="left:1201px;top:328px;width:7px;height:18px;background:#344134;"></div>
<div class="b" style="left:1208px;top:328px;width:28px;height:18px;background:#344134;"></div>
<div class="b" style="left:1236px;top:328px;width:7px;height:18px;background:#344134;"></div>
<div class="b" style="left:1243px;top:328px;width:42px;height:18px;background:#344134;"></div>
<div class="b" style="left:1285px;top:328px;width:7px;height:18px;background:#344134;"></div>
<div class="b" style="left:1292px;top:328px;width:42px;height:18px;background:#344134;"></div>
<div class="b" style="left:1334px;top:328px;width:7px;height:18px;background:#344134;"></div>
<div class="b" style="left:536px;top:346px;width:7px;height:18px;background:#344134;"></div>
<div class="b" style="left:543px;top:346px;width:21px;height:18px;background:#344134;"></div>
<div class="b" style="left:564px;top:346px;width:7px;height:18px;background:#344134;"></div>
<div class="b" style="left:571px;top:346px;width:28px;height:18px;background:#344134;"></div>
<div class="b" style="left:599px;top:346px;width:7px;height:18px;background:#344134;"></div>
<div class="b" style="left:606px;top:346px;width:35px;height:18px;background:#344134;"></div>
<div class="b" style="left:641px;top:346px;width:7px;height:18px;background:#344134;"></div>
<div class="b" style="left:760px;top:346px;width:7px;height:18px;background:#344134;"></div>
<div class="b" style="left:767px;top:346px;width:21px;height:18px;background:#344134;"></div>
<div class="b" style="left:788px;top:346px;width:7px;height:18px;background:#344134;"></div>
<div class="b" style="left:795px;top:346px;width:28px;height:18px;background:#344134;"></div>
<div class="b" style="left:823px;top:346px;width:7px;height:18px;background:#344134;"></div>
<div class="b" style="left:830px;top:346px;width:56px;height:18px;background:#344134;"></div>
<div class="b" style="left:886px;top:346px;width:7px;height:18px;background:#344134;"></div>
<div class="b" style="left:263px;top:400px;width:77px;height:18px;background:#472c2c;"></div>
<div class="b" style="left:333px;top:418px;width:28px;height:18px;background:#344134;"></div>
<i class="b wv" style="left:522px;top:432.5px;width:21px"></i>
<i class="b wv" style="left:501px;top:522.5px;width:21px"></i>
<i class="b wv" style="left:389px;top:648.5px;width:21px"></i>
<i class="b wv" style="left:487px;top:666.5px;width:21px"></i>
<i class="b wv" style="left:487px;top:774.5px;width:21px"></i>
<i class="b wv" style="left:529px;top:810.5px;width:21px"></i>
<span class="t" style="left:5px;top:6px;line-height:18px;font-size:12px;letter-spacing:-0.201px;color:#606366">237</span>
<span class="t" style="left:319px;top:6px;line-height:18px;height:18px;font-size:12.2px;letter-spacing:-0.321px"><span style="color:#bababa;">@change</span><span style="color:#a5c261;">="</span><span style="color:#ffc66d;">toggleAllCheckbox</span><span style="color:#a9b7c6;">(</span><span style="color:#a9b7c6;">$event</span><span style="color:#a9b7c6;">)</span><span style="color:#a5c261;">"</span><span style="color:#e8bf6a;">&gt;</span></span>
<span class="t" style="left:5px;top:24px;line-height:18px;font-size:12px;letter-spacing:-0.201px;color:#606366">238</span>
<span class="t" style="left:291px;top:24px;line-height:18px;height:18px;font-size:12.2px;letter-spacing:-0.321px"><span style="color:#e8bf6a;">&lt;/b-form-checkbox&gt;</span></span>
<span class="t" style="left:5px;top:42px;line-height:18px;font-size:12px;letter-spacing:-0.201px;color:#606366">239</span>
<span class="t" style="left:263px;top:42px;line-height:18px;height:18px;font-size:12.2px;letter-spacing:-0.321px"><span style="color:#e8bf6a;">&lt;/template&gt;</span></span>
<span class="t" style="left:5px;top:60px;line-height:18px;font-size:12px;letter-spacing:-0.201px;color:#606366">240</span>
<span class="t" style="left:263px;top:60px;line-height:18px;height:18px;font-size:12.2px;letter-spacing:-0.321px"><span style="color:#e8bf6a;">&lt;template</span><span style="color:#bababa;"> </span><span style="color:#bababa;">slot</span><span style="color:#a5c261;">="routes"</span><span style="color:#bababa;"> slot-scope</span><span style="color:#a5c261;">="</span><span style="color:#9876aa;font-weight:700;font-style:italic;">data</span><span style="color:#a5c261;">"</span><span style="color:#e8bf6a;">&gt;</span></span>
<span class="t" style="left:5px;top:78px;line-height:18px;font-size:12px;letter-spacing:-0.201px;color:#606366">241</span>
<span class="t" style="left:291px;top:78px;line-height:18px;height:18px;font-size:12.2px;letter-spacing:-0.321px"><span style="color:#e8bf6a;">&lt;div</span><span style="color:#bababa;"> v-html</span><span style="color:#a5c261;">="</span><span style="color:#ffc66d;">renderRoutes</span><span style="color:#a9b7c6;">(</span><span style="color:#9876aa;font-weight:700;font-style:italic;">data</span><span style="color:#a9b7c6;">.</span><span style="color:#9876aa;">item</span><span style="color:#a9b7c6;">.</span><span style="color:#9876aa;">schedules</span><span style="color:#a9b7c6;">)</span><span style="color:#a5c261;">"</span><span style="color:#e8bf6a;">&gt;&lt;/div&gt;</span></span>
<span class="t" style="left:5px;top:96px;line-height:18px;font-size:12px;letter-spacing:-0.201px;color:#606366">242</span>
<span class="t" style="left:263px;top:96px;line-height:18px;height:18px;font-size:12.2px;letter-spacing:-0.321px"><span style="color:#e8bf6a;">&lt;/template&gt;</span></span>
<span class="t" style="left:5px;top:114px;line-height:18px;font-size:12px;letter-spacing:-0.201px;color:#606366">243</span>
<span class="t" style="left:263px;top:114px;line-height:18px;height:18px;font-size:12.2px;letter-spacing:-0.321px"><span style="color:#e8bf6a;">&lt;template</span><span style="color:#bababa;"> </span><span style="color:#bababa;">slot</span><span style="color:#a5c261;">="times"</span><span style="color:#bababa;"> slot-scope</span><span style="color:#a5c261;">="</span><span style="color:#9876aa;font-weight:700;font-style:italic;">data</span><span style="color:#a5c261;">"</span><span style="color:#e8bf6a;">&gt;</span></span>
<span class="t" style="left:5px;top:132px;line-height:18px;font-size:12px;letter-spacing:-0.201px;color:#606366">244</span>
<span class="t" style="left:291px;top:132px;line-height:18px;height:18px;font-size:12.2px;letter-spacing:-0.321px"><span style="color:#a9b7c6;">{{</span><span style="color:#a9b7c6;"> </span><span style="color:#9876aa;font-weight:700;font-style:italic;">data</span><span style="color:#a9b7c6;">.</span><span style="color:#9876aa;">item</span><span style="color:#a9b7c6;">.</span><span style="color:#9876aa;">start_time</span><span style="color:#a9b7c6;"> </span><span style="color:#a9b7c6;">}} / {{</span><span style="color:#a9b7c6;"> </span><span style="color:#9876aa;font-weight:700;font-style:italic;">data</span><span style="color:#a9b7c6;">.</span><span style="color:#9876aa;">item</span><span style="color:#a9b7c6;">.</span><span style="color:#9876aa;">end_time</span><span style="color:#a9b7c6;"> </span><span style="color:#a9b7c6;">}}</span></span>
<span class="t" style="left:5px;top:150px;line-height:18px;font-size:12px;letter-spacing:-0.201px;color:#606366">245</span>
<span class="t" style="left:263px;top:150px;line-height:18px;height:18px;font-size:12.2px;letter-spacing:-0.321px"><span style="color:#e8bf6a;">&lt;/template&gt;</span></span>
<span class="t" style="left:5px;top:168px;line-height:18px;font-size:12px;letter-spacing:-0.201px;color:#606366">246</span>
<span class="t" style="left:263px;top:168px;line-height:18px;height:18px;font-size:12.2px;letter-spacing:-0.321px"><span style="color:#e8bf6a;">&lt;template</span><span style="color:#bababa;"> </span><span style="color:#bababa;">slot</span><span style="color:#a5c261;">="id"</span><span style="color:#bababa;"> slot-scope</span><span style="color:#a5c261;">="</span><span style="color:#a9b7c6;">row</span><span style="color:#a5c261;">"</span><span style="color:#e8bf6a;">&gt;</span></span>
<span class="t" style="left:5px;top:186px;line-height:18px;font-size:12px;letter-spacing:-0.201px;color:#606366">247</span>
<span class="t" style="left:291px;top:186px;line-height:18px;height:18px;font-size:12.2px;letter-spacing:-0.321px"><span style="color:#e8bf6a;">&lt;b-form-checkbox</span></span>
<span class="t" style="left:5px;top:204px;line-height:18px;font-size:12px;letter-spacing:-0.201px;color:#606366">248</span>
<span class="t" style="left:319px;top:204px;line-height:18px;height:18px;font-size:12.2px;letter-spacing:-0.321px"><span style="color:#bababa;">:checked</span><span style="color:#a5c261;">="</span><span style="color:#9876aa;">chosenUsers</span><span style="color:#a9b7c6;">.</span><span style="color:#ffc66d;">map</span><span style="color:#a9b7c6;">(u =&gt; u.</span><span style="color:#9876aa;">id</span><span style="color:#a9b7c6;">).</span><span style="color:#ffc66d;">indexOf</span><span style="color:#a9b7c6;">(</span><span style="color:#a9b7c6;">row</span><span style="color:#a9b7c6;">.</span><span style="color:#9876aa;">item</span><span style="color:#a9b7c6;">.</span><span style="color:#9876aa;">id</span><span style="color:#a9b7c6;">) !== -</span><span style="color:#6897bb;">1</span><span style="color:#a5c261;">"</span></span>
<span class="t" style="left:5px;top:222px;line-height:18px;font-size:12px;letter-spacing:-0.201px;color:#606366">249</span>
<span class="t" style="left:319px;top:222px;line-height:18px;height:18px;font-size:12.2px;letter-spacing:-0.321px"><span style="color:#bababa;">@change</span><span style="color:#a5c261;">="</span><span style="color:#ffc66d;">onCheckboxChange</span><span style="color:#a9b7c6;">(</span><span style="color:#a9b7c6;">$event</span><span style="color:#cc7832;">,</span><span style="color:#a9b7c6;"> </span><span style="color:#a9b7c6;">row</span><span style="color:#a9b7c6;">)</span><span style="color:#a5c261;">"</span><span style="color:#e8bf6a;">&gt;</span></span>
<span class="t" style="left:5px;top:240px;line-height:18px;font-size:12px;letter-spacing:-0.201px;color:#606366">250</span>
<span class="t" style="left:291px;top:240px;line-height:18px;height:18px;font-size:12.2px;letter-spacing:-0.321px"><span style="color:#e8bf6a;">&lt;/b-form-checkbox&gt;</span></span>
<span class="t" style="left:5px;top:258px;line-height:18px;font-size:12px;letter-spacing:-0.201px;color:#606366">251</span>
<span class="t" style="left:263px;top:258px;line-height:18px;height:18px;font-size:12.2px;letter-spacing:-0.321px"><span style="color:#e8bf6a;">&lt;/template&gt;</span></span>
<span class="t" style="left:5px;top:276px;line-height:18px;font-size:12px;letter-spacing:-0.201px;color:#a4a3a3">252</span>
<span class="t" style="left:263px;top:276px;line-height:18px;height:18px;font-size:12.2px;letter-spacing:-0.321px"><span style="color:#e8bf6a;">&lt;template</span><span style="color:#bababa;"> v-</span><span style="color:#bababa;">slot</span><span style="color:#bababa;">:cell</span><span style="color:#a5c261;">="</span><span style="color:#a5c261;">additi</span><span style="color:#a5c261;">onal_info"</span><span style="color:#bababa;"> slot-scope</span><span style="color:#a5c261;">="</span><span style="color:#a9b7c6;">row</span><span style="color:#a5c261;">"</span><span style="color:#e8bf6a;">&gt;</span></span>
<span class="t" style="left:5px;top:294px;line-height:18px;font-size:12px;letter-spacing:-0.201px;color:#606366">253</span>
<span class="t" style="left:291px;top:294px;line-height:18px;height:18px;font-size:12.2px;letter-spacing:-0.321px"><span style="color:#e8bf6a;">&lt;span</span><span style="color:#bababa;"> class</span><span style="color:#a5c261;">="user-type d-block"</span><span style="color:#e8bf6a;">&gt;</span><span style="color:#a9b7c6;">{{</span><span style="color:#a9b7c6;"> </span><span style="color:#9876aa;">row</span><span style="color:#a9b7c6;">.</span><span style="color:#9876aa;">item</span><span style="color:#a9b7c6;">.</span><span style="color:#9876aa;">user_type</span><span style="color:#a9b7c6;"> </span><span style="color:#a9b7c6;">}}</span><span style="color:#e8bf6a;">&lt;/span&gt;</span></span>
<span class="t" style="left:5px;top:312px;line-height:18px;font-size:12px;letter-spacing:-0.201px;color:#606366">254</span>
<span class="t" style="left:291px;top:312px;line-height:18px;height:18px;font-size:12.2px;letter-spacing:-0.321px"><span style="color:#e8bf6a;">&lt;span</span><span style="color:#bababa;"> v-if</span><span style="color:#a5c261;">="</span><span style="color:#a9b7c6;">row</span><span style="color:#a9b7c6;">.</span><span style="color:#9876aa;">item</span><span style="color:#a9b7c6;">.</span><span style="color:#9876aa;">user_type</span><span style="color:#a9b7c6;"> === </span><span style="color:#6a8759;">'</span><span style="color:#6a8759;display:inline-block;width:56px;letter-spacing:0;font-size:11.630px;vertical-align:top;">მოსწავლე</span><span style="color:#6a8759;">'</span><span style="color:#a5c261;">"</span><span style="color:#e8bf6a;">&gt;</span></span>
<span class="t" style="left:5px;top:330px;line-height:18px;font-size:12px;letter-spacing:-0.201px;color:#606366">255</span>
<span class="t" style="left:319px;top:330px;line-height:18px;height:18px;font-size:12.2px;letter-spacing:-0.321px"><span style="color:#e8bf6a;">&lt;span</span><span style="color:#bababa;"> class</span><span style="color:#a5c261;">="d-block"</span><span style="color:#bababa;"> v-if</span><span style="color:#a5c261;">="</span><span style="color:#a9b7c6;">row</span><span style="color:#a9b7c6;">.</span><span style="color:#9876aa;">item</span><span style="color:#a9b7c6;">.</span><span style="color:#9876aa;">parent</span><span style="color:#a5c261;">"</span><span style="color:#e8bf6a;">&gt;</span><span style="color:#a9b7c6;display:inline-block;width:49px;letter-spacing:0;font-size:11.630px;vertical-align:top;">მშობელი</span><span style="color:#a9b7c6;">: {{</span><span style="color:#a9b7c6;"> </span><span style="color:#9876aa;">row</span><span style="color:#a9b7c6;">.</span><span style="color:#9876aa;">item</span><span style="color:#a9b7c6;">.</span><span style="color:#9876aa;">parent</span><span style="color:#a9b7c6;">.</span><span style="color:#9876aa;">firstname</span><span style="color:#a9b7c6;"> + </span><span style="color:#6a8759;">' '</span><span style="color:#a9b7c6;"> + </span><span style="color:#9876aa;">row</span><span style="color:#a9b7c6;">.</span><span style="color:#9876aa;">item</span><span style="color:#a9b7c6;">.</span><span style="color:#9876aa;">parent</span><span style="color:#a9b7c6;">.</span><span style="color:#9876aa;">lastname</span><span style="color:#a9b7c6;"> </span><span style="color:#a9b7c6;">}} ({{</span><span style="color:#a9b7c6;"> </span><span style="color:#9876aa;">row</span><span style="color:#a9b7c6;">.</span><span style="color:#9876aa;">item</span><span style="color:#a9b7c6;">.</span><span style="color:#9876aa;">parent</span><span style="color:#a9b7c6;">.</span><span style="color:#9876aa;">mobile</span><span style="color:#a9b7c6;"> </span><span style="color:#a9b7c6;">}})</span><span style="color:#e8bf6a;">&lt;/span&gt;</span></span>
<span class="t" style="left:5px;top:348px;line-height:18px;font-size:12px;letter-spacing:-0.201px;color:#606366">256</span>
<span class="t" style="left:319px;top:348px;line-height:18px;height:18px;font-size:12.2px;letter-spacing:-0.321px"><span style="color:#e8bf6a;">&lt;span</span><span style="color:#bababa;"> class</span><span style="color:#a5c261;">="d-block"</span><span style="color:#e8bf6a;">&gt;</span><span style="color:#a9b7c6;display:inline-block;width:35px;letter-spacing:0;font-size:11.630px;vertical-align:top;">კლასი</span><span style="color:#a9b7c6;">: {{</span><span style="color:#a9b7c6;"> </span><span style="color:#9876aa;">row</span><span style="color:#a9b7c6;">.</span><span style="color:#9876aa;">item</span><span style="color:#a9b7c6;">.</span><span style="color:#9876aa;">class</span><span style="color:#a9b7c6;"> </span><span style="color:#a9b7c6;">}}. </span><span style="color:#a9b7c6;display:inline-block;width:56px;letter-spacing:0;font-size:11.630px;vertical-align:top;">პარალელი</span><span style="color:#a9b7c6;">: {{</span><span style="color:#a9b7c6;"> </span><span style="color:#9876aa;">row</span><span style="color:#a9b7c6;">.</span><span style="color:#9876aa;">item</span><span style="color:#a9b7c6;">.</span><span style="color:#9876aa;">parallel</span><span style="color:#a9b7c6;"> </span><span style="color:#a9b7c6;">}}</span><span style="color:#e8bf6a;">&lt;/span&gt;</span></span>
<span class="t" style="left:5px;top:366px;line-height:18px;font-size:12px;letter-spacing:-0.201px;color:#606366">257</span>
<span class="t" style="left:5px;top:384px;line-height:18px;font-size:12px;letter-spacing:-0.201px;color:#606366">258</span>
<span class="t" style="left:291px;top:384px;line-height:18px;height:18px;font-size:12.2px;letter-spacing:-0.321px"><span style="color:#e8bf6a;">&lt;/span&gt;</span></span>
<span class="t" style="left:5px;top:402px;line-height:18px;font-size:12px;letter-spacing:-0.201px;color:#606366">259</span>
<span class="t" style="left:263px;top:402px;line-height:18px;height:18px;font-size:12.2px;letter-spacing:-0.321px"><span style="color:#e8bf6a;">&lt;/template&gt;</span></span>
<span class="t" style="left:5px;top:420px;line-height:18px;font-size:12px;letter-spacing:-0.201px;color:#606366">260</span>
<span class="t" style="left:263px;top:420px;line-height:18px;height:18px;font-size:12.2px;letter-spacing:-0.321px"><span style="color:#e8bf6a;">&lt;template</span><span style="color:#bababa;"> </span><span style="color:#bababa;">slot</span><span style="color:#a5c261;">="actions"</span><span style="color:#bababa;"> slot-scope</span><span style="color:#a5c261;">="</span><span style="color:#a9b7c6;">row</span><span style="color:#a5c261;">"</span><span style="color:#e8bf6a;">&gt;</span></span>
<span class="t" style="left:5px;top:438px;line-height:18px;font-size:12px;letter-spacing:-0.201px;color:#606366">261</span>
<span class="t" style="left:291px;top:438px;line-height:18px;height:18px;font-size:12.2px;letter-spacing:-0.321px"><span style="color:#e8bf6a;">&lt;div</span><span style="color:#bababa;"> class</span><span style="color:#a5c261;">="info-actions"</span><span style="color:#e8bf6a;">&gt;</span></span>
<span class="t" style="left:5px;top:456px;line-height:18px;font-size:12px;letter-spacing:-0.201px;color:#606366">262</span>
<span class="t" style="left:319px;top:456px;line-height:18px;height:18px;font-size:12.2px;letter-spacing:-0.321px"><span style="color:#e8bf6a;">&lt;b-button</span></span>
<span class="t" style="left:5px;top:474px;line-height:18px;font-size:12px;letter-spacing:-0.201px;color:#606366">263</span>
<span class="t" style="left:347px;top:474px;line-height:18px;height:18px;font-size:12.2px;letter-spacing:-0.321px"><span style="color:#bababa;">title</span><span style="color:#a5c261;">="</span><span style="color:#a5c261;display:inline-block;width:161px;letter-spacing:0;font-size:11.630px;vertical-align:top;">მომხმარებლის მონაცემები</span><span style="color:#a5c261;">"</span></span>
<span class="t" style="left:5px;top:492px;line-height:18px;font-size:12px;letter-spacing:-0.201px;color:#606366">264</span>
<span class="t" style="left:347px;top:492px;line-height:18px;height:18px;font-size:12.2px;letter-spacing:-0.321px"><span style="color:#bababa;">variant</span><span style="color:#a5c261;">="primary"</span></span>
<span class="t" style="left:5px;top:510px;line-height:18px;font-size:12px;letter-spacing:-0.201px;color:#606366">265</span>
<span class="t" style="left:347px;top:510px;line-height:18px;height:18px;font-size:12.2px;letter-spacing:-0.321px"><span style="color:#bababa;">@click</span><span style="color:#a5c261;">="</span><span style="color:#ffc66d;">showEditModal</span><span style="color:#a9b7c6;">(</span><span style="color:#a9b7c6;">row</span><span style="color:#a9b7c6;">.</span><span style="color:#9876aa;">item</span><span style="color:#a9b7c6;">)</span><span style="color:#a5c261;">"</span></span>
<span class="t" style="left:5px;top:528px;line-height:18px;font-size:12px;letter-spacing:-0.201px;color:#606366">266</span>
<span class="t" style="left:347px;top:528px;line-height:18px;height:18px;font-size:12.2px;letter-spacing:-0.321px"><span style="color:#bababa;">class</span><span style="color:#a5c261;">="info-icon"</span><span style="color:#e8bf6a;">&gt;</span></span>
<span class="t" style="left:5px;top:546px;line-height:18px;font-size:12px;letter-spacing:-0.201px;color:#606366">267</span>
<span class="t" style="left:347px;top:546px;line-height:18px;height:18px;font-size:12.2px;letter-spacing:-0.321px"><span style="color:#e8bf6a;">&lt;i</span><span style="color:#bababa;"> class</span><span style="color:#a5c261;">="fa fa-info-circle"</span><span style="color:#e8bf6a;">&gt;&lt;/i&gt;</span></span>
<span class="t" style="left:5px;top:564px;line-height:18px;font-size:12px;letter-spacing:-0.201px;color:#606366">268</span>
<span class="t" style="left:319px;top:564px;line-height:18px;height:18px;font-size:12.2px;letter-spacing:-0.321px"><span style="color:#e8bf6a;">&lt;/b-button&gt;</span></span>
<span class="t" style="left:5px;top:582px;line-height:18px;font-size:12px;letter-spacing:-0.201px;color:#606366">269</span>
<span class="t" style="left:319px;top:582px;line-height:18px;height:18px;font-size:12.2px;letter-spacing:-0.321px"><span style="color:#e8bf6a;">&lt;b-button</span></span>
<span class="t" style="left:5px;top:600px;line-height:18px;font-size:12px;letter-spacing:-0.201px;color:#606366">270</span>
<span class="t" style="left:347px;top:600px;line-height:18px;height:18px;font-size:12.2px;letter-spacing:-0.321px"><span style="color:#bababa;">title</span><span style="color:#a5c261;">="</span><span style="color:#a5c261;display:inline-block;width:70px;letter-spacing:0;font-size:11.630px;vertical-align:top;">მარშრუტები</span><span style="color:#a5c261;">"</span></span>
<span class="t" style="left:5px;top:618px;line-height:18px;font-size:12px;letter-spacing:-0.201px;color:#606366">271</span>
<span class="t" style="left:347px;top:618px;line-height:18px;height:18px;font-size:12.2px;letter-spacing:-0.321px"><span style="color:#bababa;">variant</span><span style="color:#a5c261;">="success"</span></span>
<span class="t" style="left:5px;top:636px;line-height:18px;font-size:12px;letter-spacing:-0.201px;color:#606366">272</span>
<span class="t" style="left:347px;top:636px;line-height:18px;height:18px;font-size:12.2px;letter-spacing:-0.321px"><span style="color:#bababa;">v-if</span><span style="color:#a5c261;">="</span><span style="color:#a9b7c6;">row</span><span style="color:#a9b7c6;">.</span><span style="color:#9876aa;">item</span><span style="color:#a9b7c6;">.</span><span style="color:#9876aa;">routes</span><span style="color:#a9b7c6;">.</span><span style="color:#9876aa;">length</span><span style="color:#a9b7c6;"> &gt; </span><span style="color:#6897bb;">0</span><span style="color:#a5c261;">"</span></span>
<span class="t" style="left:5px;top:654px;line-height:18px;font-size:12px;letter-spacing:-0.201px;color:#606366">273</span>
<span class="t" style="left:347px;top:654px;line-height:18px;height:18px;font-size:12.2px;letter-spacing:-0.321px"><span style="color:#bababa;">@click</span><span style="color:#a5c261;">="</span><span style="color:#ffc66d;">showDetails</span><span style="color:#a9b7c6;">(</span><span style="color:#a9b7c6;">row</span><span style="color:#a9b7c6;">.</span><span style="color:#9876aa;">item</span><span style="color:#cc7832;">,</span><span style="color:#a9b7c6;"> </span><span style="color:#6897bb;">0</span><span style="color:#a9b7c6;">)</span><span style="color:#a5c261;">"</span><span style="color:#e8bf6a;">&gt;</span></span>
<span class="t" style="left:5px;top:672px;line-height:18px;font-size:12px;letter-spacing:-0.201px;color:#606366">274</span>
<span class="t" style="left:347px;top:672px;line-height:18px;height:18px;font-size:12.2px;letter-spacing:-0.321px"><span style="color:#e8bf6a;">&lt;i</span><span style="color:#bababa;"> class</span><span style="color:#a5c261;">="fa fa-map"</span><span style="color:#e8bf6a;">&gt;&lt;/i&gt;</span></span>
<span class="t" style="left:5px;top:690px;line-height:18px;font-size:12px;letter-spacing:-0.201px;color:#606366">275</span>
<span class="t" style="left:319px;top:690px;line-height:18px;height:18px;font-size:12.2px;letter-spacing:-0.321px"><span style="color:#e8bf6a;">&lt;/b-button&gt;</span></span>
<span class="t" style="left:5px;top:708px;line-height:18px;font-size:12px;letter-spacing:-0.201px;color:#606366">276</span>
<span class="t" style="left:319px;top:708px;line-height:18px;height:18px;font-size:12.2px;letter-spacing:-0.321px"><span style="color:#e8bf6a;">&lt;b-button</span></span>
<span class="t" style="left:5px;top:726px;line-height:18px;font-size:12px;letter-spacing:-0.201px;color:#606366">277</span>
<span class="t" style="left:347px;top:726px;line-height:18px;height:18px;font-size:12.2px;letter-spacing:-0.321px"><span style="color:#bababa;">title</span><span style="color:#a5c261;">="</span><span style="color:#a5c261;display:inline-block;width:119px;letter-spacing:0;font-size:11.630px;vertical-align:top;">გადახდილი თანხები</span><span style="color:#a5c261;">"</span></span>
<span class="t" style="left:5px;top:744px;line-height:18px;font-size:12px;letter-spacing:-0.201px;color:#606366">278</span>
<span class="t" style="left:347px;top:744px;line-height:18px;height:18px;font-size:12.2px;letter-spacing:-0.321px"><span style="color:#bababa;">variant</span><span style="color:#a5c261;">="warning"</span></span>
<span class="t" style="left:5px;top:762px;line-height:18px;font-size:12px;letter-spacing:-0.201px;color:#606366">279</span>
<span class="t" style="left:347px;top:762px;line-height:18px;height:18px;font-size:12.2px;letter-spacing:-0.321px"><span style="color:#bababa;">@click</span><span style="color:#a5c261;">="</span><span style="color:#ffc66d;">showDetails</span><span style="color:#a9b7c6;">(</span><span style="color:#a9b7c6;">row</span><span style="color:#a9b7c6;">.</span><span style="color:#9876aa;">item</span><span style="color:#cc7832;">,</span><span style="color:#a9b7c6;"> </span><span style="color:#6897bb;">1</span><span style="color:#a9b7c6;">)</span><span style="color:#a5c261;">"</span><span style="color:#e8bf6a;">&gt;</span></span>
<span class="t" style="left:5px;top:780px;line-height:18px;font-size:12px;letter-spacing:-0.201px;color:#606366">280</span>
<span class="t" style="left:347px;top:780px;line-height:18px;height:18px;font-size:12.2px;letter-spacing:-0.321px"><span style="color:#e8bf6a;">&lt;i</span><span style="color:#bababa;"> :class</span><span style="color:#a5c261;">="</span><span style="color:#9876aa;font-weight:700;font-style:italic;">payment</span><span style="color:#a9b7c6;">.</span><span style="color:#9876aa;">payment_date</span><span style="color:#a9b7c6;"> !== </span><span style="color:#cc7832;">null</span><span style="color:#a9b7c6;"> ? </span><span style="color:#6a8759;">'text-success'</span><span style="color:#a9b7c6;"> : </span><span style="color:#6a8759;">'text-danger'</span><span style="color:#a5c261;">"</span></span>
<span class="t" style="left:5px;top:798px;line-height:18px;font-size:12px;letter-spacing:-0.201px;color:#606366">281</span>
<span class="t" style="left:368px;top:798px;line-height:18px;height:18px;font-size:12.2px;letter-spacing:-0.321px"><span style="color:#bababa;">v-for</span><span style="color:#a5c261;">="</span><span style="color:#a9b7c6;">(</span><span style="color:#9876aa;font-weight:700;font-style:italic;">payment</span><span style="color:#cc7832;">,</span><span style="color:#a9b7c6;"> </span><span style="color:#9876aa;font-weight:700;font-style:italic;">i</span><span style="color:#a9b7c6;">) </span><span style="color:#cc7832;">in</span><span style="color:#a9b7c6;"> </span><span style="color:#a9b7c6;">row</span><span style="color:#a9b7c6;">.</span><span style="color:#9876aa;">item</span><span style="color:#a9b7c6;">.</span><span style="color:#9876aa;">payments</span><span style="color:#a5c261;">"</span></span>
<span class="t" style="left:5px;top:816px;line-height:18px;font-size:12px;letter-spacing:-0.201px;color:#606366">282</span>
<span class="t" style="left:368px;top:816px;line-height:18px;height:18px;font-size:12.2px;letter-spacing:-0.321px"><span style="color:#bababa;">class</span><span style="color:#a5c261;">="fa fa-dollar-sign"</span><span style="color:#bababa;"> aria-hidden</span><span style="color:#a5c261;">="true"</span><span style="color:#e8bf6a;">&gt;&lt;/i&gt;</span></span>
</div>
<div class="b" style="left:1773px;top:210px;width:85px;height:29px;background:#3c3f41;border-radius:4px"></div>
<svg class="b" style="left:1782.5px;top:217.5px;" width="15" height="15" viewBox="0 0 15 15"><circle cx="7.500" cy="7.500" r="7.500" fill="#e33b2e"/><path d="M7.500 7.500L1 3.750A7.500 7.500 0 0 0 7.500 15l3.250-5.600z" fill="#2da94f"/><path d="M7.500 7.500l3.250 1.900L7.500 15A7.500 7.500 0 0 0 14 3.750H7.500z" fill="#fdd23e"/><circle cx="7.500" cy="7.500" r="3.400" fill="#fff"/><circle cx="7.500" cy="7.500" r="2.700" fill="#4a8af4"/></svg>
<svg class="b" style="left:1808.5px;top:217.5px;" width="15" height="15" viewBox="0 0 15 15"><circle cx="7.500" cy="8" r="7" fill="#ff7a1a"/><path d="M9 0.500c3 2 5.500 5 5 9-1-3-2-4-3.500-5 0-1.500-.5-3-1.500-4z" fill="#ffd43a"/><circle cx="7.800" cy="7.800" r="3.800" fill="#3b4fc4"/><path d="M1 6c1-2 2.500-3 4-3.500l1.500 2c1.500 0 2.500.5 3 1.500-1.500 0-2.500.5-2.500 1.500s1 1.500 2.500 1c-.5 1.500-2 2-3.500 1.500-2-.5-3.500-2-5-4z" fill="#ff5a2a"/><path d="M0.600 8a7 7 0 0 0 13 3.500c-2 2-5 2.500-7.500 1.500s-4.500-3-5.500-5z" fill="#e3247a"/></svg>
<svg class="b" style="left:1834.5px;top:217.5px;" width="15" height="15" viewBox="0 0 15 15"><ellipse cx="7.500" cy="7.500" rx="7.300" ry="7.400" fill="#e81a2b"/><ellipse cx="7.500" cy="7.500" rx="3.100" ry="5.400" fill="#3c3f41"/><path d="M9.500 1.200a7.400 7.400 0 0 1 0 12.600 6.500 6.500 0 0 0 0-12.600z" fill="#a80f1c"/></svg>
<div class="b" style="left:1886px;top:193px;width:2px;height:8px;background:#cfd1d3;"></div>
<div class="b" style="left:1890px;top:193px;width:2px;height:8px;background:#cfd1d3;"></div>
<div class="b" style="left:1879px;top:209px;width:2px;height:85px;background:#4a7aa8;"></div>
<div class="b" style="left:1879px;top:305px;width:2px;height:5px;background:#4a7aa8;"></div>
<div class="b" style="left:1879px;top:316px;width:2px;height:21.5px;background:#4a7aa8;"></div>
<div class="b" style="left:1879px;top:339.5px;width:2px;height:26px;background:#4a7aa8;"></div>
<div class="b" style="left:1879px;top:369.5px;width:2px;height:15.5px;background:#4a7aa8;"></div>
<div class="b" style="left:1879px;top:388px;width:2px;height:10px;background:#4a7aa8;"></div>
<div class="b" style="left:1879px;top:399px;width:2px;height:13px;background:#4a7aa8;"></div>
<div class="b" style="left:1879px;top:415px;width:2px;height:15px;background:#4a7aa8;"></div>
<div class="b" style="left:1879px;top:434px;width:2px;height:6px;background:#4a7aa8;"></div>
<div class="b" style="left:1879px;top:441px;width:2px;height:9px;background:#4a7aa8;"></div>
<div class="b" style="left:1879px;top:467px;width:2px;height:12px;background:#4a7aa8;"></div>
<div class="b" style="left:1879px;top:528px;width:2px;height:10px;background:#4a7aa8;"></div>
<div class="b" style="left:1879px;top:547px;width:2px;height:29px;background:#4a7aa8;"></div>
<div class="b" style="left:1879px;top:581px;width:2px;height:9px;background:#4a7aa8;"></div>
<div class="b" style="left:1879px;top:598px;width:2px;height:20px;background:#4a7aa8;"></div>
<div class="b" style="left:1883px;top:308.5px;width:14px;height:2px;background:#857b5e;"></div>
<div class="b" style="left:1883px;top:459px;width:14px;height:6px;background:#857b5e;"></div>
<div class="b" style="left:1883px;top:506px;width:14px;height:2px;background:#0f7d14;"></div>
<div class="b" style="left:1883px;top:512px;width:14px;height:2px;background:#0f7d14;"></div>
<div class="b" style="left:1883px;top:514.5px;width:14px;height:2px;background:#857b5e;"></div>
<div class="b" style="left:1883px;top:518px;width:14px;height:2px;background:#0f7d14;"></div>
<div class="b" style="left:1883px;top:522px;width:14px;height:2px;background:#0f7d14;"></div>
<div class="b" style="left:1883px;top:526px;width:14px;height:2px;background:#0f7d14;"></div>
<div class="b" style="left:1883px;top:529px;width:14px;height:3px;background:#857b5e;"></div>
<div class="b" style="left:1883px;top:534px;width:14px;height:6px;background:#857b5e;"></div>
<div class="b" style="left:1883px;top:534.5px;width:14px;height:2px;background:#7fb08c;"></div>
<div class="b" style="left:1883px;top:544px;width:14px;height:2px;background:#0f7d14;"></div>
<div class="b" style="left:1883px;top:551px;width:14px;height:2px;background:#857b5e;"></div>
<div class="b" style="left:1883px;top:560px;width:14px;height:3px;background:#857b5e;"></div>
<div class="b" style="left:1883px;top:568.5px;width:14px;height:2px;background:#857b5e;"></div>
<div class="b" style="left:1883px;top:572px;width:14px;height:2px;background:#d9a521;"></div>
<div class="b" style="left:1888px;top:515px;width:8px;height:54px;background:rgba(170,170,170,.25);"></div>
<div class="b" style="left:1883px;top:734px;width:14px;height:2px;background:#5a9e6e;"></div>
<div class="b" style="left:1883px;top:971px;width:14px;height:2px;background:#d9a521;"></div>
<div class="b" style="left:1883px;top:982px;width:14px;height:2px;background:#d9a521;"></div>
<div class="b" style="left:1879px;top:1000px;width:2px;height:5px;background:#4a8a57;"></div>
<div class="b" style="left:425px;top:1009px;width:1473px;height:25px;background:#313335;"></div>
<div class="b" style="left:425px;top:1009px;width:1473px;height:1px;background:#424446;"></div>
<div class="b" style="left:425px;top:189px;width:1px;height:820px;background:#313335;"></div>
<span class="t" style="left:498.7px;top:1011.5px;line-height:20px;font-size:15px;color:#a9a842;letter-spacing:0.438px;">template</span>
<span class="t" style="left:585px;top:1011.5px;line-height:20px;font-size:15px;color:#c75450;letter-spacing:0.424px;">div.container-fluid.home</span>
<svg class="b" style="left:570px;top:1018px;" width="5" height="8" viewBox="0 0 5 8"><path d="M1 0.800l3 3.200-3 3.200" stroke="#6a6d6f" stroke-width="1" fill="none"/></svg>
<span class="t" style="left:779px;top:1011.5px;line-height:20px;font-size:15px;color:#b05fb5;letter-spacing:0.415px;">div.row</span>
<svg class="b" style="left:764px;top:1018px;" width="5" height="8" viewBox="0 0 5 8"><path d="M1 0.800l3 3.200-3 3.200" stroke="#6a6d6f" stroke-width="1" fill="none"/></svg>
<span class="t" style="left:854px;top:1011.5px;line-height:20px;font-size:15px;color:#6c8bb0;letter-spacing:0.120px;">div.content.col-md-12.col-sm-12</span>
<svg class="b" style="left:839px;top:1018px;" width="5" height="8" viewBox="0 0 5 8"><path d="M1 0.800l3 3.200-3 3.200" stroke="#6a6d6f" stroke-width="1" fill="none"/></svg>
<span class="t" style="left:1095px;top:1011.5px;line-height:20px;font-size:15px;color:#4aa0b8;letter-spacing:0.211px;">div.card</span>
<svg class="b" style="left:1080px;top:1018px;" width="5" height="8" viewBox="0 0 5 8"><path d="M1 0.800l3 3.200-3 3.200" stroke="#6a6d6f" stroke-width="1" fill="none"/></svg>
<span class="t" style="left:1174px;top:1011.5px;line-height:20px;font-size:15px;color:#4fa653;letter-spacing:0.246px;">div.card-body</span>
<svg class="b" style="left:1159px;top:1018px;" width="5" height="8" viewBox="0 0 5 8"><path d="M1 0.800l3 3.200-3 3.200" stroke="#6a6d6f" stroke-width="1" fill="none"/></svg>
<span class="t" style="left:1291px;top:1011.5px;line-height:20px;font-size:15px;color:#a9a842;letter-spacing:0.178px;">b-table#users-table.my-3</span>
<svg class="b" style="left:1276px;top:1018px;" width="5" height="8" viewBox="0 0 5 8"><path d="M1 0.800l3 3.200-3 3.200" stroke="#6a6d6f" stroke-width="1" fill="none"/></svg>
<span class="t" style="left:1485px;top:1011.5px;line-height:20px;font-size:15px;color:#c75450;letter-spacing:0.638px;">template</span>
<svg class="b" style="left:1470px;top:1018px;" width="5" height="8" viewBox="0 0 5 8"><path d="M1 0.800l3 3.200-3 3.200" stroke="#6a6d6f" stroke-width="1" fill="none"/></svg>
<!-- bottom -->
<div class="b" style="left:1898px;top:133px;width:22px;height:901px;background:#3c3f41;"></div>
<div class="b" style="left:1897px;top:133px;width:1px;height:901px;background:#323436;"></div>
<svg class="b" style="left:1904px;top:145px;" width="9.2" height="11.2" viewBox="0 0 9.2 11.2"><rect x="0" y="0" width="9.200" height="3.100" fill="#afb1b3"/><rect x="0" y="4.050" width="9.200" height="3.100" fill="#afb1b3"/><rect x="0" y="8.100" width="9.200" height="3.100" fill="#afb1b3"/><rect x="1.200" y="1" width="2" height="1.100" fill="#2b2d2e"/><rect x="1.200" y="5.050" width="2" height="1.100" fill="#2b2d2e"/><rect x="1.200" y="9.100" width="2" height="1.100" fill="#2b2d2e"/></svg>
<span class="t" style="left:1908.500px;top:200px;width:0;height:0;overflow:visible;"><span class="t" style="transform:translate(-50%,-50%) rotate(90deg);font-size:13px;line-height:16px;color:#bbbbbb;letter-spacing:0.014px">Remote Host</span></span>
<svg class="b" style="left:1903px;top:261.8px;" width="11" height="12.6" viewBox="0 0 11 12.6"><ellipse cx="5.500" cy="2" rx="5.500" ry="2" fill="#afb1b3"/><path d="M0 3.200c0 2.700 11 2.700 11 0v2.300c0 2.700-11 2.700-11 0zM0 6.500c0 2.700 11 2.700 11 0v2.300c0 2.700-11 2.700-11 0zM0 9.800c0 2.700 11 2.700 11 0v.800c0 2.700-11 2.700-11 0z" fill="#afb1b3"/></svg>
<span class="t" style="left:1908.500px;top:307.5px;width:0;height:0;overflow:visible;"><span class="t" style="transform:translate(-50%,-50%) rotate(90deg);font-size:13px;line-height:16px;color:#bbbbbb;letter-spacing:-0.093px">Database</span></span>
<div class="b" style="left:67px;top:1034px;width:1853px;height:23px;background:#3c3f41;"></div>
<div class="b" style="left:67px;top:1034px;width:1853px;height:1px;background:#323436;"></div>
<div class="b" style="left:67px;top:1057px;width:1853px;height:1px;background:#323436;"></div>
<svg class="b" style="left:102px;top:1042px;" width="10" height="9" viewBox="0 0 10 9"><path d="M0 1h1.800M3.300 1h6.700M0 4.500h1.800M3.300 4.500h6.700M0 8h1.800M3.300 8h6.700" stroke="#afb1b3" stroke-width="1.600"/></svg>
<span class="t" style="left:117.5px;top:1036.5px;line-height:20px;font-size:13px;color:#bbbbbb;letter-spacing:-0.668px;text-underline-offset:2px;"><u>6</u>: TODO</span>
<svg class="b" style="left:191.5px;top:1040.5px;" width="11" height="12" viewBox="0 0 11 12"><path d="M1 0v12" stroke="#afb1b3" stroke-width="1.700"/><path d="M1 8h6.500v-6" stroke="#afb1b3" stroke-width="1.700" fill="none"/><path d="M4 4.200l3.500-3.700 3.500 3.700z" fill="#afb1b3"/></svg>
<span class="t" style="left:207.5px;top:1036.5px;line-height:20px;font-size:13px;color:#bbbbbb;letter-spacing:0.044px;text-underline-offset:2px;"><u>9</u>: Version Control</span>
<svg class="b" style="left:338px;top:1040.5px;" width="11" height="11" viewBox="0 0 11 11"><rect width="11" height="11" fill="#afb1b3"/><path d="M2 2.500l2.800 2.500-2.800 2.500M5.500 8.500h3.500" stroke="#3c3f41" stroke-width="1.100" fill="none"/></svg>
<span class="t" style="left:354.3px;top:1036.5px;line-height:20px;font-size:13px;color:#bbbbbb;letter-spacing:-0.081px;">Terminal</span>
<svg class="b" style="left:426.8px;top:1040.5px;" width="13" height="11" viewBox="0 0 13 11"><rect width="13" height="11" fill="#afb1b3"/><text x="1" y="9.200" font-size="9" font-weight="700" fill="#3c3f41" font-family="Liberation Sans" letter-spacing="-.2">TS</text></svg>
<span class="t" style="left:445px;top:1036.5px;line-height:20px;font-size:13px;color:#bbbbbb;letter-spacing:-0.126px;">TypeScript</span>
<svg class="b" style="left:529px;top:1040.5px;" width="11" height="12" viewBox="0 0 11 12"><path d="M3 12v-10M0.300 4.300l2.700-3 2.700 3M8 0v10M5.300 7.700l2.700 3 2.700-3" stroke="#afb1b3" stroke-width="1.500" fill="none"/></svg>
<span class="t" style="left:545.3px;top:1036.5px;line-height:20px;font-size:13px;color:#bbbbbb;letter-spacing:-0.047px;">File Transfer</span>
<div class="b" style="left:1810px;top:1040.5px;width:13px;height:13px;background:#db5860;border-radius:50%"></div>
<span class="t" style="left:1814.3px;top:1041px;line-height:12px;font-size:9px;color:#ffffff;font-weight:700;">3</span>
<span class="t" style="left:1827.6px;top:1036.5px;line-height:20px;font-size:13px;color:#bbbbbb;letter-spacing:-0.143px;">Event Log</span>
<div class="b" style="left:67px;top:1058px;width:1853px;height:22px;background:#3c3f41;"></div>
<svg class="b" style="left:73px;top:1063px;" width="12" height="12" viewBox="0 0 12 12"><rect x="2.700" y="0.600" width="8.700" height="8.700" fill="none" stroke="#afb1b3" stroke-width="1.200"/><path d="M0.600 3v8.400h8.400" fill="none" stroke="#afb1b3" stroke-width="1.200"/></svg>
<span class="t" style="left:94.5px;top:1058.5px;line-height:20px;font-size:15px;color:#bbbbbb;letter-spacing:-0.003px;">External file changes sync may be slow: File watcher faile... (today 13:05)</span>
<span class="t" style="left:1532.7px;top:1058.5px;line-height:20px;font-size:15px;color:#bbbbbb;letter-spacing:-0.556px;">252:50</span>
<span class="t" style="left:1587.7px;top:1058.5px;line-height:20px;font-size:15px;color:#bbbbbb;letter-spacing:-2.205px;">LF</span>
<span class="t" style="left:1614.5px;top:1058.5px;line-height:20px;font-size:15px;color:#bbbbbb;letter-spacing:-1.249px;">UTF-8</span>
<span class="t" style="left:1660px;top:1058.5px;line-height:20px;font-size:15px;color:#bbbbbb;letter-spacing:0.405px;">EditorConfig</span>
<span class="t" style="left:1758.4px;top:1058.5px;line-height:20px;font-size:15px;color:#bbbbbb;letter-spacing:0.066px;">Git: master</span>
<svg class="b" style="left:1846px;top:1062px;" width="13" height="13" viewBox="0 0 13 13"><path d="M2.500 6v-2.500a2.500 2.500 0 0 1 5 0" stroke="#afb1b3" stroke-width="1.500" fill="none"/><rect x="5" y="5.500" width="8" height="7" fill="#afb1b3"/></svg>
<svg class="b" style="left:1871.5px;top:1061.5px;" width="14" height="14" viewBox="0 0 14 14"><path d="M3.500 4.500l.7-3.500h5.600l.7 3.500z" fill="#afb1b3"/><rect x="0.500" y="4.500" width="13" height="1.600" fill="#afb1b3"/><path d="M3 7.200h8v2.300a4 4 0 0 1-8 0z" fill="#afb1b3"/><rect x="4.200" y="8" width="2" height="1.300" fill="#3c3f41"/><rect x="7.800" y="8" width="2" height="1.300" fill="#3c3f41"/><path d="M1.500 14c.5-2 2-2.500 5.500-2.500s5 .5 5.500 2.500z" fill="#afb1b3"/></svg>
<svg class="b" style="left:1895px;top:1061px;" width="15" height="15" viewBox="0 0 15 15"><circle cx="5" cy="5" r="2.700" fill="none" stroke="#afb1b3" stroke-width="2.200"/><circle cx="5" cy="5" r="4.300" fill="none" stroke="#afb1b3" stroke-width="1.600" stroke-dasharray="1.700 1.680"/><text x="8.300" y="14.500" font-size="10" font-weight="700" fill="#afb1b3" font-family="Liberation Sans">?</text></svg>
</body></html>
